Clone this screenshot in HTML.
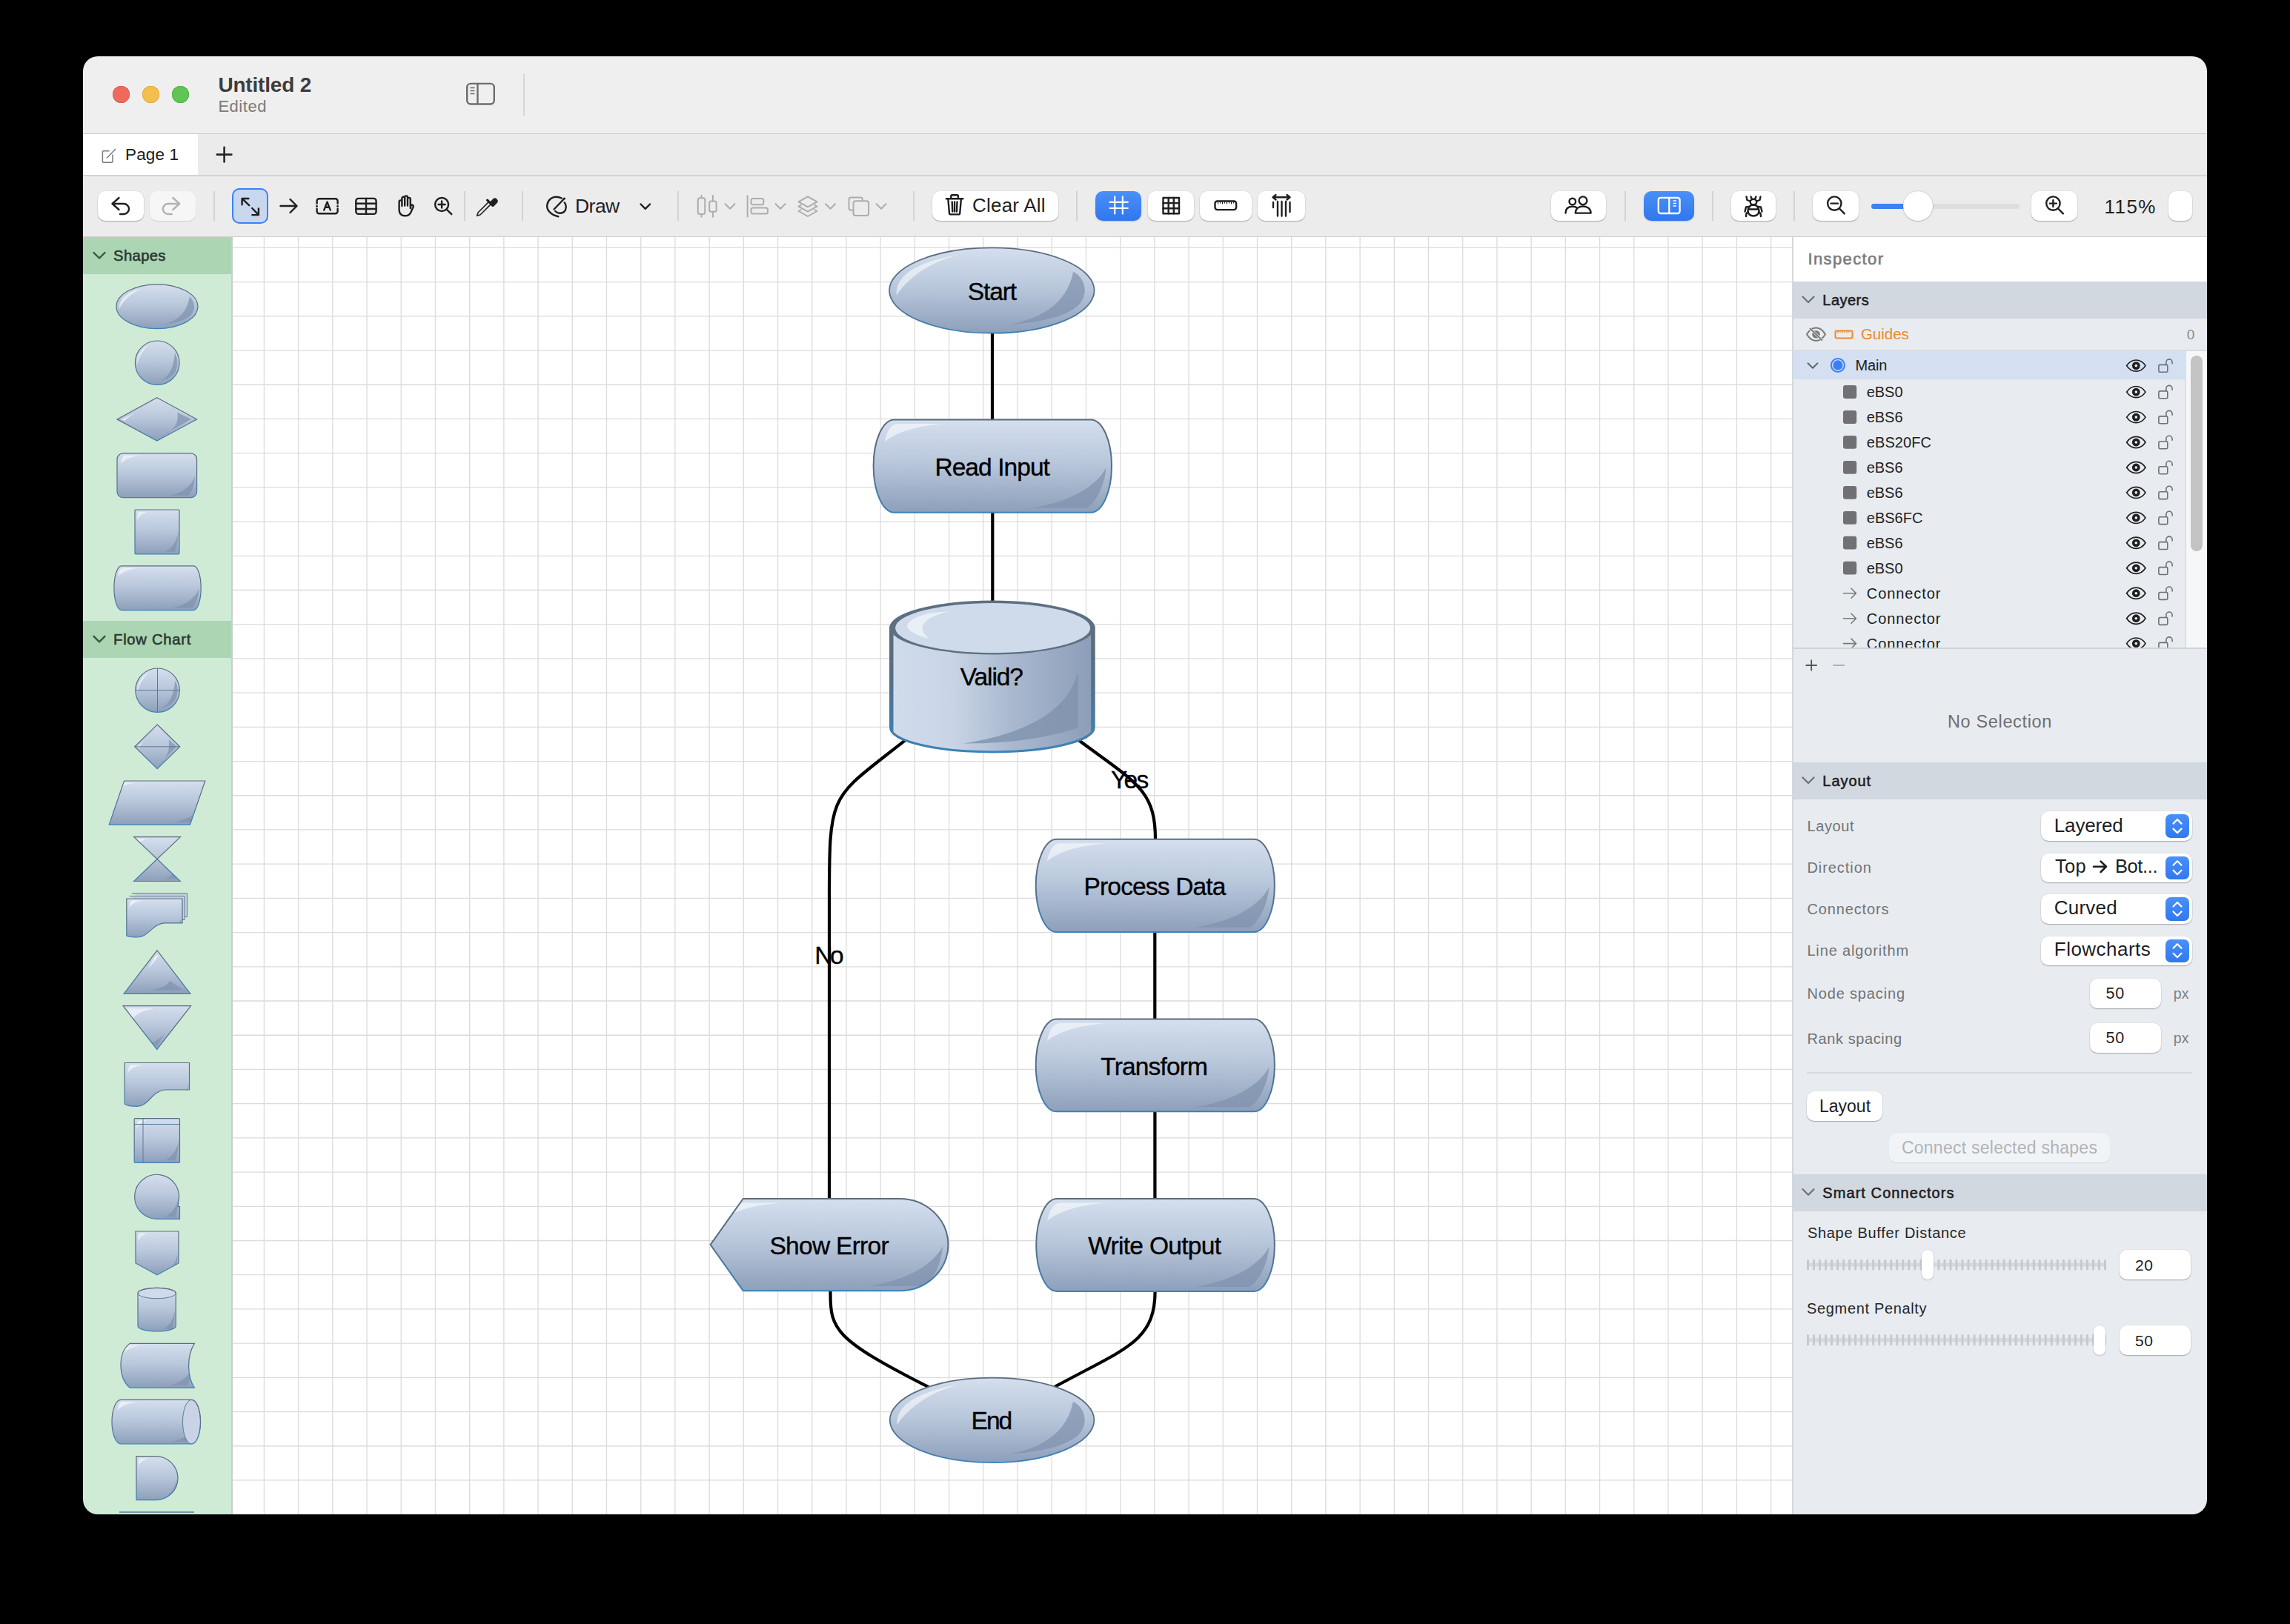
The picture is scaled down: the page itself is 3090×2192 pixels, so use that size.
<!DOCTYPE html><html><head><meta charset="utf-8"><style>
html,body{margin:0;padding:0;background:#000;width:3090px;height:2192px;overflow:hidden;}
.t{position:absolute;white-space:nowrap;font-family:"Liberation Sans",sans-serif;}
#win{position:absolute;left:0;top:0;width:3090px;height:2192px;clip-path:inset(76px 112px 148px 112px round 20px);}
#win div,#win svg{position:absolute;}
.btn{background:#fff;border-radius:10px;box-shadow:0 1px 1.5px rgba(0,0,0,0.28),0 0 0 0.5px rgba(0,0,0,0.06);}
</style></head><body><div id="win">
<svg width="0" height="0" style="position:absolute;left:0;top:0"><defs><linearGradient id="gf" x1="0" y1="0" x2="0" y2="1"><stop offset="0" stop-color="#d4dfee"/><stop offset="0.45" stop-color="#bac8dc"/><stop offset="1" stop-color="#8d9fba"/></linearGradient><linearGradient id="gs" x1="0" y1="0" x2="0" y2="1"><stop offset="0" stop-color="#5e6c7a"/><stop offset="0.5" stop-color="#556f88"/><stop offset="1" stop-color="#3b82ba"/></linearGradient><linearGradient id="gcyl" x1="0" y1="0" x2="1" y2="0"><stop offset="0" stop-color="#d0dcec"/><stop offset="0.3" stop-color="#c9d5e6"/><stop offset="0.6" stop-color="#a9b8cf"/><stop offset="1" stop-color="#8b9db7"/></linearGradient></defs></svg>
<div style="position:absolute;left:112px;top:76px;width:2866px;height:104px;background:#efefef;"></div>
<div style="position:absolute;left:112px;top:180px;width:2866px;height:1px;background:#c9c9c9;"></div>
<div style="position:absolute;left:112px;top:181px;width:2866px;height:55px;background:#ebebeb;"></div>
<div style="position:absolute;left:112px;top:181px;width:155px;height:55px;background:#fff;"></div>
<div style="position:absolute;left:112px;top:236px;width:2866px;height:2px;background:#d4d4d4;"></div>
<div style="position:absolute;left:112px;top:238px;width:2866px;height:81px;background:#ececec;"></div>
<div style="position:absolute;left:112px;top:319px;width:2866px;height:1px;background:#cfcfcf;"></div>
<div style="left:152px;top:116px;width:23px;height:23px;border-radius:50%;background:#ee6a5f;box-shadow:inset 0 0 0 0.7px #d4564c;"></div>
<div style="left:192px;top:116px;width:23px;height:23px;border-radius:50%;background:#f5bf4f;box-shadow:inset 0 0 0 0.7px #d9a33a;"></div>
<div style="left:232px;top:116px;width:23px;height:23px;border-radius:50%;background:#61c555;box-shadow:inset 0 0 0 0.7px #4ea843;"></div>
<div class="t" style="left:294.4px;top:100.7px;font-size:28px;line-height:28px;color:#3d3d3d;font-weight:bold;letter-spacing:-0.18px;">Untitled 2</div>
<div class="t" style="left:294.4px;top:133.4px;font-size:22px;line-height:22px;color:#7b7b7b;letter-spacing:0.52px;">Edited</div>
<svg style="position:absolute;left:620px;top:100px;" width="60" height="50" viewBox="620 100 60 50"><rect x="630.2" y="112.9" width="36.6" height="27.6" rx="5" fill="none" stroke="#6d6d6d" stroke-width="2.4"/><line x1="644.5" y1="113" x2="644.5" y2="140.5" stroke="#6d6d6d" stroke-width="2.4"/><path d="M634.5,118.5h6M634.5,122.5h6M634.5,126.5h6" stroke="#6d6d6d" stroke-width="1.6"/></svg>
<div style="position:absolute;left:706px;top:100px;width:2px;height:56px;background:#d6d6d6;"></div>
<svg style="position:absolute;left:130px;top:195px;" width="35" height="30" viewBox="130 195 35 30"><path d="M152,208.5 v9.5 a1.2,1.2 0 0 1 -1.2,1.2 h-11.2 a1.2,1.2 0 0 1 -1.2,-1.2 v-13 a1.2,1.2 0 0 1 1.2,-1.2 h8" fill="none" stroke="#7a7a7a" stroke-width="1.5"/><path d="M144,213.5 L156,201" stroke="#7a7a7a" stroke-width="1.5"/></svg>
<div class="t" style="left:169.0px;top:197.5px;font-size:22.5px;line-height:22.5px;color:#1c1c1c;letter-spacing:0.14px;">Page 1</div>
<svg style="position:absolute;left:285px;top:190px;" width="35" height="35" viewBox="285 190 35 35"><path d="M302.6,198.8v19.6M292.8,208.6h19.6" stroke="#262626" stroke-width="2.6" stroke-linecap="round"/></svg>
<div class="btn" style="left:131.8px;top:257.8px;width:62.1px;height:40.4px;"></div>
<div class="btn" style="left:202px;top:257.8px;width:61.8px;height:40.4px;background:#f6f6f6;box-shadow:0 1px 1.5px rgba(0,0,0,0.12);"></div>
<svg style="position:absolute;left:140px;top:255px;" width="130" height="45" viewBox="140 255 130 45"><path d="M160.5,267 L151.5,275 L160.5,283 M151.5,275 H167 a7,7 0 0 1 0,14 H162" fill="none" stroke="#1f1f1f" stroke-width="2.4" stroke-linecap="round" stroke-linejoin="round"/><path d="M233.3,267 L242.3,275 L233.3,283 M242.3,275 H226.8 a7,7 0 0 0 0,14 H231.8" fill="none" stroke="#b2b2b2" stroke-width="2.4" stroke-linecap="round" stroke-linejoin="round"/></svg>
<div style="position:absolute;left:288px;top:258px;width:2px;height:40px;background:#d3d3d3;"></div>
<div style="left:313.4px;top:253.6px;width:48.7px;height:48.8px;box-sizing:border-box;border:2.6px solid #3a83f6;border-radius:10px;background:#c8d6ee;"></div>
<svg style="position:absolute;left:320px;top:260px;" width="400" height="40" viewBox="320 260 400 40"><path d="M326.6,276.3 V268 H335.4 M327,268.4 L336.2,277.2 M340.2,281 L348.8,289.8 M340.4,290.1 H348.9 V281.5" fill="none" stroke="#1f1f1f" stroke-width="2.4" stroke-linecap="round" stroke-linejoin="round" stroke-width="2.6"/><path d="M378.5,278 H400.5 M391.5,269 L400.5,278 L391.5,287" fill="none" stroke="#1f1f1f" stroke-width="2.4" stroke-linecap="round" stroke-linejoin="round"/><path d="M427.6,274.8 V271.3 a3,3 0 0 1 3,-3 H452.6 a3,3 0 0 1 3,3 V274.8 M427.6,281.8 V285.3 a3,3 0 0 0 3,3 H452.6 a3,3 0 0 0 3,-3 V281.8" fill="none" stroke="#1f1f1f" stroke-width="2.4" stroke-linecap="round" stroke-linejoin="round" stroke-width="2.2"/><circle cx="427.6" cy="278.3" r="1.4" fill="#1f1f1f"/><circle cx="455.6" cy="278.3" r="1.4" fill="#1f1f1f"/><path d="M437.2,283.6 L441.5,272.6 L445.8,283.6 M438.7,279.7 H444.3" fill="none" stroke="#1f1f1f" stroke-width="2.4" stroke-linecap="round" stroke-linejoin="round" stroke-width="1.9"/><rect x="480.3" y="267.9" width="27.3" height="21" rx="3.5" fill="none" stroke="#1f1f1f" stroke-width="2.4" stroke-linecap="round" stroke-linejoin="round" stroke-width="2.3"/><path d="M494,268 V289 M480.5,274.8 H507.5 M480.5,282 H507.5" fill="none" stroke="#1f1f1f" stroke-width="2.4" stroke-linecap="round" stroke-linejoin="round" stroke-width="1.9"/><path d="M538.6,283 V272.3 a1.9,1.9 0 0 1 3.8,0 V278 V267.6 a1.9,1.9 0 0 1 3.8,0 V277.5 V266.3 a1.9,1.9 0 0 1 3.8,0 V277.5 V268.8 a1.9,1.9 0 0 1 3.8,0 V281 L554.6,277.2 a1.9,1.9 0 0 1 3.1,2.1 L554,287.3 Q551.5,291.3 546.8,291.3 Q538.6,291.3 538.6,283 Z" fill="none" stroke="#1f1f1f" stroke-width="2.4" stroke-linecap="round" stroke-linejoin="round" stroke-width="1.7"/><circle cx="596.1" cy="276" r="9" fill="none" stroke="#1f1f1f" stroke-width="2.4" stroke-linecap="round" stroke-linejoin="round" stroke-width="2.3"/><path d="M591.6,276 H600.6 M596.1,271.5 V280.5" fill="none" stroke="#1f1f1f" stroke-width="2.4" stroke-linecap="round" stroke-linejoin="round" stroke-width="2.1"/><path d="M602.9,282.8 L609.3,289.2" fill="none" stroke="#1f1f1f" stroke-width="2.4" stroke-linecap="round" stroke-linejoin="round" stroke-width="3.2"/></svg>
<div style="position:absolute;left:626px;top:258px;width:2px;height:40px;background:#d3d3d3;"></div>
<svg style="position:absolute;left:640px;top:262px;" width="35" height="35" viewBox="640 262 35 35"><path d="M643.6,291.3 L645.2,286.8 L659.6,272.4 L662.6,275.4 L648.2,289.8 Z" fill="none" stroke="#1f1f1f" stroke-width="1.6" stroke-linejoin="round"/><path d="M657.6,270.2 L664.8,277.4" stroke="#1f1f1f" stroke-width="3.2" stroke-linecap="round"/><path d="M660.5,273.2 L665.2,268.5 a3.9,3.9 0 0 1 5.5,5.5 L666,278.7 Z" fill="#1f1f1f"/></svg>
<div style="position:absolute;left:704px;top:258px;width:2px;height:40px;background:#d3d3d3;"></div>
<svg style="position:absolute;left:730px;top:258px;" width="160" height="42" viewBox="730 258 160 42"><path d="M753.3,292.2 C742,290 737,282 738.4,276 C740,268.5 746,265.8 750,265.8 C753.5,265.8 756,266.5 757.8,267.6" fill="none" stroke="#1f1f1f" stroke-width="2.4" stroke-linecap="round" stroke-linejoin="round" stroke-width="2.2"/><path d="M761.8,273.5 C764.5,277 764.5,283 761,286 C758,288.5 752.5,288.5 749.3,285" fill="none" stroke="#1f1f1f" stroke-width="2.4" stroke-linecap="round" stroke-linejoin="round" stroke-width="2.2"/><path d="M747.5,282.5 L760.5,269" fill="none" stroke="#1f1f1f" stroke-width="2.4" stroke-linecap="round" stroke-linejoin="round" stroke-width="2.8"/><circle cx="761.5" cy="268" r="1.6" fill="#1f1f1f"/><path d="M864.5,275.5 L870.8,281.8 L877.1,275.5" fill="none" stroke="#1f1f1f" stroke-width="2.4" stroke-linecap="round" stroke-linejoin="round" stroke-width="3.2"/></svg>
<div class="t" style="left:776.0px;top:265.2px;font-size:26.5px;line-height:26.5px;color:#1f1f1f;letter-spacing:-0.53px;">Draw</div>
<div style="position:absolute;left:914px;top:258px;width:2px;height:40px;background:#d3d3d3;"></div>
<svg style="position:absolute;left:935px;top:258px;" width="270" height="42" viewBox="935 258 270 42"><rect x="941.8" y="267.3" width="9.4" height="21.7" rx="2.5" fill="none" stroke="#adadad" stroke-width="2" stroke-linecap="round" stroke-linejoin="round"/><path d="M946.5,263.8 V267.3 M946.5,289 V292.8" fill="none" stroke="#adadad" stroke-width="2" stroke-linecap="round" stroke-linejoin="round"/><rect x="957.2" y="271.5" width="9.4" height="14.2" rx="2.5" fill="none" stroke="#adadad" stroke-width="2" stroke-linecap="round" stroke-linejoin="round"/><path d="M961.9,264 V271.5 M961.9,285.7 V292.8" fill="none" stroke="#adadad" stroke-width="2" stroke-linecap="round" stroke-linejoin="round"/><path d="M978.5,275.2 L985.0,281.7 L991.5,275.2" fill="none" stroke="#adadad" stroke-width="2" stroke-linecap="round" stroke-linejoin="round" stroke-width="2.4"/><path d="M1008.6,264.2 V292.6" fill="none" stroke="#adadad" stroke-width="2" stroke-linecap="round" stroke-linejoin="round"/><rect x="1013.5" y="268" width="16.8" height="8.2" rx="2.5" fill="none" stroke="#adadad" stroke-width="2" stroke-linecap="round" stroke-linejoin="round"/><rect x="1013.5" y="280.4" width="22.4" height="8.2" rx="2.5" fill="none" stroke="#adadad" stroke-width="2" stroke-linecap="round" stroke-linejoin="round"/><path d="M1046.5,275.2 L1053.0,281.7 L1059.5,275.2" fill="none" stroke="#adadad" stroke-width="2" stroke-linecap="round" stroke-linejoin="round" stroke-width="2.4"/><path d="M1090,265.3 L1102.5,272.3 L1090,279.3 L1077.5,272.3 Z" fill="none" stroke="#adadad" stroke-width="2" stroke-linecap="round" stroke-linejoin="round"/><path d="M1080.5,277 L1077.5,278.6 L1090,285.6 L1102.5,278.6 L1099.5,277 M1080.5,283.3 L1077.5,285 L1090,292 L1102.5,285 L1099.5,283.3" fill="none" stroke="#adadad" stroke-width="2" stroke-linecap="round" stroke-linejoin="round"/><path d="M1114,275.2 L1120.5,281.7 L1127,275.2" fill="none" stroke="#adadad" stroke-width="2" stroke-linecap="round" stroke-linejoin="round" stroke-width="2.4"/><path d="M1150.8,283.7 H1148.5 a3,3 0 0 1 -3,-3 V269.5 a3,3 0 0 1 3,-3 H1161 a3,3 0 0 1 3,3 V271" fill="none" stroke="#adadad" stroke-width="2" stroke-linecap="round" stroke-linejoin="round"/><rect x="1151.5" y="271.2" width="20.6" height="19.8" rx="3" fill="none" stroke="#adadad" stroke-width="2" stroke-linecap="round" stroke-linejoin="round"/><path d="M1182.5,275.2 L1189.0,281.7 L1195.5,275.2" fill="none" stroke="#adadad" stroke-width="2" stroke-linecap="round" stroke-linejoin="round" stroke-width="2.4"/></svg>
<div style="position:absolute;left:1231.7px;top:258px;width:2px;height:40px;background:#d3d3d3;"></div>
<div class="btn" style="left:1257.6px;top:257.6px;width:170.4px;height:40.9px;"></div>
<svg style="position:absolute;left:1270px;top:258px;" width="40" height="38" viewBox="1270 258 40 38"><path d="M1276.8,268.2 H1299.4 M1283.3,268 V264.8 a1.6,1.6 0 0 1 1.6,-1.6 h6.4 a1.6,1.6 0 0 1 1.6,1.6 V268 M1279.3,268.4 L1281,287.8 a1.8,1.8 0 0 0 1.8,1.6 h10.6 a1.8,1.8 0 0 0 1.8,-1.6 L1296.9,268.4 M1284.7,272.5 L1285.2,285.5 M1288.1,272.5 V285.5 M1291.5,272.5 L1291,285.5" fill="none" stroke="#1f1f1f" stroke-width="2.4" stroke-linecap="round" stroke-linejoin="round" stroke-width="2.1"/></svg>
<div class="t" style="left:1312.0px;top:263.7px;font-size:26px;line-height:26px;color:#1f1f1f;letter-spacing:0.22px;">Clear All</div>
<div style="position:absolute;left:1452px;top:258px;width:2px;height:40px;background:#d3d3d3;"></div>
<div style="left:1478px;top:257.8px;width:62px;height:40.4px;border-radius:10px;background:linear-gradient(#4a90f8,#3076ee);box-shadow:0 1px 1.5px rgba(0,0,0,0.2);"></div>
<div class="btn" style="left:1549px;top:257.8px;width:61.7px;height:40.4px;"></div>
<div class="btn" style="left:1619px;top:257.8px;width:69.7px;height:40.4px;"></div>
<div class="btn" style="left:1697px;top:257.8px;width:63.8px;height:40.4px;"></div>
<svg style="position:absolute;left:1480px;top:258px;" width="290" height="42" viewBox="1480 258 290 42"><path d="M1504.2,265.2 V288.6 M1514.8,265.2 V288.6 M1497.4,272.9 H1521.8 M1497.4,281 H1521.8" fill="none" stroke="#fff" stroke-width="2.1" stroke-linecap="round"/><rect x="1569.5" y="267" width="21.5" height="21.2" fill="none" stroke="#1f1f1f" stroke-width="2.4" stroke-linecap="round" stroke-linejoin="round" stroke-width="2.3" stroke-linecap="butt" stroke-linejoin="miter"/><path d="M1576.7,267 V288.2 M1583.8,267 V288.2 M1569.5,274.1 H1591 M1569.5,281.2 H1591" fill="none" stroke="#1f1f1f" stroke-width="2.4" stroke-linecap="round" stroke-linejoin="round" stroke-width="2" stroke-linecap="butt"/><rect x="1639.5" y="271.5" width="28.6" height="11.6" rx="3" fill="none" stroke="#1f1f1f" stroke-width="2.4" stroke-linecap="round" stroke-linejoin="round" stroke-width="2.2"/><path d="M1643.5,272.5 v3 M1646.5,272.5 v2 M1649.5,272.5 v3 M1652.5,272.5 v2 M1655.5,272.5 v3 M1658.5,272.5 v2 M1661.5,272.5 v3 M1664.5,272.5 v2" stroke="#1f1f1f" stroke-width="1.1"/><path d="M1717.5,266.3 H1740.5 M1721.5,263 L1717.5,266.3 L1721.5,269.6 M1736.5,263 L1740.5,266.3 L1736.5,269.6" fill="none" stroke="#1f1f1f" stroke-width="2.4" stroke-linecap="round" stroke-linejoin="round" stroke-width="2"/><path d="M1718,273 V280 M1724,272 V291.5 M1729.5,272 V291.5 M1735,272 V291.5 M1740.5,273 V286" fill="none" stroke="#1f1f1f" stroke-width="2.4" stroke-linecap="round" stroke-linejoin="round" stroke-width="2.2"/></svg>
<div class="btn" style="left:2092.8px;top:257.8px;width:74.2px;height:40.4px;"></div>
<div style="position:absolute;left:2192px;top:258px;width:2px;height:40px;background:#d3d3d3;"></div>
<div style="left:2218px;top:257.8px;width:68px;height:40.4px;border-radius:10px;background:linear-gradient(#4a90f8,#3076ee);box-shadow:0 1px 1.5px rgba(0,0,0,0.2);"></div>
<div style="position:absolute;left:2310px;top:258px;width:2px;height:40px;background:#d3d3d3;"></div>
<div class="btn" style="left:2336px;top:257.8px;width:60.0px;height:40.4px;"></div>
<div style="position:absolute;left:2420px;top:258px;width:2px;height:40px;background:#d3d3d3;"></div>
<div class="btn" style="left:2446px;top:257.8px;width:62.0px;height:40.4px;"></div>
<div class="btn" style="left:2740.8px;top:257.8px;width:61.9px;height:40.4px;"></div>
<div class="btn" style="left:2925.7px;top:257.8px;width:32.3px;height:40.4px;"></div>
<svg style="position:absolute;left:2100px;top:258px;" width="880" height="42" viewBox="2100 258 880 42"><circle cx="2121.8" cy="272" r="4.3" fill="none" stroke="#1f1f1f" stroke-width="2.4" stroke-linecap="round" stroke-linejoin="round" stroke-width="2"/><path d="M2112.5,287.6 C2112.5,281 2116.5,278.8 2121.8,278.8 C2124.5,278.8 2126.3,279.3 2127.6,280.3" fill="none" stroke="#1f1f1f" stroke-width="2.4" stroke-linecap="round" stroke-linejoin="round" stroke-width="2"/><circle cx="2136" cy="270.8" r="5.4" fill="none" stroke="#1f1f1f" stroke-width="2.4" stroke-linecap="round" stroke-linejoin="round" stroke-width="2"/><path d="M2125.8,287.6 C2125.8,282 2130,278.5 2136,278.5 C2142,278.5 2146.6,282 2146.6,287.6 Z" fill="none" stroke="#1f1f1f" stroke-width="2.4" stroke-linecap="round" stroke-linejoin="round" stroke-width="2"/><rect x="2237.8" y="266.8" width="28.8" height="21.2" rx="3" fill="none" stroke="#fff" stroke-width="2.3"/><path d="M2252.3,267 V288" stroke="#fff" stroke-width="2.3"/><path d="M2257.5,271 h4.5 M2257.5,274.5 h4.5 M2257.5,278 h4.5" stroke="#fff" stroke-width="1.6"/><path d="M2362.5,265.5 l1.5,3.5 M2369.5,265.5 l-1.5,3.5" fill="none" stroke="#1f1f1f" stroke-width="2.4" stroke-linecap="round" stroke-linejoin="round" stroke-width="1.8"/><ellipse cx="2366" cy="272.5" rx="4.3" ry="3.8" fill="none" stroke="#1f1f1f" stroke-width="2.4" stroke-linecap="round" stroke-linejoin="round" stroke-width="2"/><path d="M2366,276.5 c-5.5,0 -7.5,5 -7.5,8.5 c0,4 3.5,6.5 7.5,6.5 c4,0 7.5,-2.5 7.5,-6.5 c0,-3.5 -2,-8.5 -7.5,-8.5 Z M2359.5,282.5 h13" fill="none" stroke="#1f1f1f" stroke-width="2.4" stroke-linecap="round" stroke-linejoin="round" stroke-width="2"/><path d="M2361.5,271.5 l-4,-1.5 l-1,-4.5 M2370.5,271.5 l4,-1.5 l1,-4.5 M2359.5,279 l-3.5,0.5 l-1.5,6 M2372.5,279 l3.5,0.5 l1.5,6 M2359,286 l-2.5,2 l-0.5,4 M2373,286 l2.5,2 l0.5,4" fill="none" stroke="#1f1f1f" stroke-width="2.4" stroke-linecap="round" stroke-linejoin="round" stroke-width="1.8"/><circle cx="2475.3" cy="274.6" r="9.2" fill="none" stroke="#1f1f1f" stroke-width="2.4" stroke-linecap="round" stroke-linejoin="round" stroke-width="2.3"/><path d="M2470.6,274.6 H2480" fill="none" stroke="#1f1f1f" stroke-width="2.4" stroke-linecap="round" stroke-linejoin="round" stroke-width="2.1"/><path d="M2482,281.5 L2488.8,288.3" fill="none" stroke="#1f1f1f" stroke-width="2.4" stroke-linecap="round" stroke-linejoin="round" stroke-width="3.2"/><circle cx="2770.4" cy="274.6" r="9.2" fill="none" stroke="#1f1f1f" stroke-width="2.4" stroke-linecap="round" stroke-linejoin="round" stroke-width="2.3"/><path d="M2765.9,274.6 H2774.9 M2770.4,270.1 V279.1" fill="none" stroke="#1f1f1f" stroke-width="2.4" stroke-linecap="round" stroke-linejoin="round" stroke-width="2.1"/><path d="M2777.1,281.5 L2783.9,288.3" fill="none" stroke="#1f1f1f" stroke-width="2.4" stroke-linecap="round" stroke-linejoin="round" stroke-width="3.2"/></svg>
<div style="position:absolute;left:2525px;top:274.5px;width:200px;height:7px;background:#dedede;border-radius:3.5px;"></div>
<div style="position:absolute;left:2525px;top:274.5px;width:63px;height:7px;background:#3b82f6;border-radius:3.5px;"></div>
<div style="left:2567.7px;top:258px;width:40px;height:40px;border-radius:50%;background:#fff;box-shadow:0 0.5px 2px rgba(0,0,0,0.3),0 0 0 0.5px rgba(0,0,0,0.08);"></div>
<div class="t" style="left:2839.5px;top:266.3px;font-size:26px;line-height:26px;color:#1f1f1f;letter-spacing:1.47px;">115%</div>
<div style="position:absolute;left:112px;top:320px;width:200px;height:1724px;background:#cfebd6;"></div>
<div style="position:absolute;left:312px;top:320px;width:2px;height:1724px;background:#c9cdca;"></div>
<div style="position:absolute;left:112px;top:320px;width:200px;height:50px;background:#acd5b4;"></div>
<div style="position:absolute;left:112px;top:838px;width:200px;height:49.5px;background:#acd5b4;"></div>
<svg style="position:absolute;left:120px;top:335px;" width="30" height="20" viewBox="120 335 30 20"><path d="M126.5,341 L134,348.5 L141.5,341" fill="none" stroke="#2e5e3a" stroke-width="2.4" stroke-linecap="round" stroke-linejoin="round"/></svg>
<svg style="position:absolute;left:120px;top:853px;" width="30" height="20" viewBox="120 853 30 20"><path d="M126.5,858.8 L134,866.3 L141.5,858.8" fill="none" stroke="#2e5e3a" stroke-width="2.4" stroke-linecap="round" stroke-linejoin="round"/></svg>
<div class="t" style="left:153.1px;top:334.8px;font-size:20.2px;line-height:20.2px;color:#2b3a2f;-webkit-text-stroke:0.6px #2b3a2f;letter-spacing:0.38px;">Shapes</div>
<div class="t" style="left:153.1px;top:852.9px;font-size:20.2px;line-height:20.2px;color:#2b3a2f;-webkit-text-stroke:0.6px #2b3a2f;letter-spacing:0.73px;">Flow Chart</div>
<svg style="position:absolute;left:112px;top:320px;" width="200" height="1724" viewBox="112 320 200 1724"><clipPath id="c1"><path d="M157,413.70000000000005 A55.0,29.900000000000006 0 1 1 267,413.70000000000005 A55.0,29.900000000000006 0 1 1 157,413.70000000000005 Z"/></clipPath><path d="M157,413.70000000000005 A55.0,29.900000000000006 0 1 1 267,413.70000000000005 A55.0,29.900000000000006 0 1 1 157,413.70000000000005 Z" fill="url(#gf)"/><g clip-path="url(#c1)"><path d="M0.035,0.555 C0.03,0.38 0.09,0.18 0.339,0.083 C0.22,0.15 0.10,0.32 0.035,0.555 Z" fill="#fff" fill-opacity="0.55" transform="translate(157,383.8) scale(110,59.80000000000001)"/><path d="M0.897,0.28 C0.96,0.36 0.975,0.55 0.92,0.68 C0.85,0.82 0.72,0.88 0.59,0.896 C0.76,0.82 0.87,0.62 0.897,0.28 Z" fill="#7f92ad" fill-opacity="0.72" transform="translate(157,383.8) scale(110,59.80000000000001)"/></g><path d="M157,413.70000000000005 A55.0,29.900000000000006 0 1 1 267,413.70000000000005 A55.0,29.900000000000006 0 1 1 157,413.70000000000005 Z" fill="none" stroke="url(#gs)" stroke-width="1.2"/><clipPath id="c2"><path d="M182.4,489.7 A29.799999999999997,29.69999999999999 0 1 1 242,489.7 A29.799999999999997,29.69999999999999 0 1 1 182.4,489.7 Z"/></clipPath><path d="M182.4,489.7 A29.799999999999997,29.69999999999999 0 1 1 242,489.7 A29.799999999999997,29.69999999999999 0 1 1 182.4,489.7 Z" fill="url(#gf)"/><g clip-path="url(#c2)"><path d="M0.035,0.555 C0.03,0.38 0.09,0.18 0.339,0.083 C0.22,0.15 0.10,0.32 0.035,0.555 Z" fill="#fff" fill-opacity="0.55" transform="translate(182.4,460) scale(59.599999999999994,59.39999999999998)"/><path d="M0.897,0.28 C0.96,0.36 0.975,0.55 0.92,0.68 C0.85,0.82 0.72,0.88 0.59,0.896 C0.76,0.82 0.87,0.62 0.897,0.28 Z" fill="#7f92ad" fill-opacity="0.72" transform="translate(182.4,460) scale(59.599999999999994,59.39999999999998)"/></g><path d="M182.4,489.7 A29.799999999999997,29.69999999999999 0 1 1 242,489.7 A29.799999999999997,29.69999999999999 0 1 1 182.4,489.7 Z" fill="none" stroke="url(#gs)" stroke-width="1.2"/><clipPath id="c3"><path d="M211.8,536.7 L265.6,565.9 L211.8,595.0 L158.0,565.9 Z"/></clipPath><path d="M211.8,536.7 L265.6,565.9 L211.8,595.0 L158.0,565.9 Z" fill="url(#gf)"/><g clip-path="url(#c3)"><path d="M0.05,0.5 L0.22,0.36 C0.15,0.44 0.12,0.49 0.1,0.54 Z" fill="#fff" fill-opacity="0.55" transform="translate(158,536.7) scale(107.60000000000002,58.299999999999955)"/><path d="M0.755,0.344 L0.93,0.5 L0.53,0.91 C0.70,0.78 0.78,0.62 0.755,0.344 Z" fill="#7f92ad" fill-opacity="0.72" transform="translate(158,536.7) scale(107.60000000000002,58.299999999999955)"/></g><path d="M211.8,536.7 L265.6,565.9 L211.8,595.0 L158.0,565.9 Z" fill="none" stroke="url(#gs)" stroke-width="1.2"/><clipPath id="c4"><path d="M166,611.9 H257.6 A8,8 0 0 1 265.6,619.9 V663.7 A8,8 0 0 1 257.6,671.7 H166 A8,8 0 0 1 158,663.7 V619.9 A8,8 0 0 1 166,611.9 Z"/></clipPath><path d="M166,611.9 H257.6 A8,8 0 0 1 265.6,619.9 V663.7 A8,8 0 0 1 257.6,671.7 H166 A8,8 0 0 1 158,663.7 V619.9 A8,8 0 0 1 166,611.9 Z" fill="url(#gf)"/><g clip-path="url(#c4)"><path d="M0.046,0.239 C0.058,0.13 0.068,0.05 0.10,0.044 L0.30,0.044 C0.18,0.065 0.09,0.14 0.046,0.239 Z" fill="#fff" fill-opacity="0.55" transform="translate(158,611.9) scale(107.60000000000002,59.80000000000007)"/><path d="M0.667,0.951 L0.898,0.951 C0.94,0.87 0.97,0.70 0.977,0.518 C0.93,0.75 0.80,0.90 0.667,0.951 Z" fill="#7f92ad" fill-opacity="0.72" transform="translate(158,611.9) scale(107.60000000000002,59.80000000000007)"/></g><path d="M166,611.9 H257.6 A8,8 0 0 1 265.6,619.9 V663.7 A8,8 0 0 1 257.6,671.7 H166 A8,8 0 0 1 158,663.7 V619.9 A8,8 0 0 1 166,611.9 Z" fill="none" stroke="url(#gs)" stroke-width="1.2"/><clipPath id="c5"><path d="M183,688 H241 A1,1 0 0 1 242,689 V746.8 A1,1 0 0 1 241,747.8 H183 A1,1 0 0 1 182,746.8 V689 A1,1 0 0 1 183,688 Z"/></clipPath><path d="M183,688 H241 A1,1 0 0 1 242,689 V746.8 A1,1 0 0 1 241,747.8 H183 A1,1 0 0 1 182,746.8 V689 A1,1 0 0 1 183,688 Z" fill="url(#gf)"/><g clip-path="url(#c5)"><path d="M0.046,0.239 C0.058,0.13 0.068,0.05 0.10,0.044 L0.30,0.044 C0.18,0.065 0.09,0.14 0.046,0.239 Z" fill="#fff" fill-opacity="0.55" transform="translate(182,688) scale(60,59.799999999999955)"/><path d="M0.667,0.951 L0.898,0.951 C0.94,0.87 0.97,0.70 0.977,0.518 C0.93,0.75 0.80,0.90 0.667,0.951 Z" fill="#7f92ad" fill-opacity="0.72" transform="translate(182,688) scale(60,59.799999999999955)"/></g><path d="M183,688 H241 A1,1 0 0 1 242,689 V746.8 A1,1 0 0 1 241,747.8 H183 A1,1 0 0 1 182,746.8 V689 A1,1 0 0 1 183,688 Z" fill="none" stroke="url(#gs)" stroke-width="1.2"/><clipPath id="c6"><path d="M163.9,763.8 H261.2 A10,29.90 0 0 1 261.2,823.6 H163.9 A10,29.90 0 0 1 163.9,763.8 Z"/></clipPath><path d="M163.9,763.8 H261.2 A10,29.90 0 0 1 261.2,823.6 H163.9 A10,29.90 0 0 1 163.9,763.8 Z" fill="url(#gf)"/><g clip-path="url(#c6)"><path d="M0.046,0.239 C0.058,0.13 0.068,0.05 0.10,0.044 L0.30,0.044 C0.18,0.065 0.09,0.14 0.046,0.239 Z" fill="#fff" fill-opacity="0.55" transform="translate(153.9,763.8) scale(117.29999999999998,59.80000000000007)"/><path d="M0.667,0.951 L0.898,0.951 C0.94,0.87 0.97,0.70 0.977,0.518 C0.93,0.75 0.80,0.90 0.667,0.951 Z" fill="#7f92ad" fill-opacity="0.72" transform="translate(153.9,763.8) scale(117.29999999999998,59.80000000000007)"/></g><path d="M163.9,763.8 H261.2 A10,29.90 0 0 1 261.2,823.6 H163.9 A10,29.90 0 0 1 163.9,763.8 Z" fill="none" stroke="url(#gs)" stroke-width="1.2"/><clipPath id="c7"><path d="M182.8,931.7 A29.75,29.69999999999999 0 1 1 242.3,931.7 A29.75,29.69999999999999 0 1 1 182.8,931.7 Z"/></clipPath><path d="M182.8,931.7 A29.75,29.69999999999999 0 1 1 242.3,931.7 A29.75,29.69999999999999 0 1 1 182.8,931.7 Z" fill="url(#gf)"/><g clip-path="url(#c7)"><path d="M0.035,0.555 C0.03,0.38 0.09,0.18 0.339,0.083 C0.22,0.15 0.10,0.32 0.035,0.555 Z" fill="#fff" fill-opacity="0.55" transform="translate(182.8,902) scale(59.5,59.39999999999998)"/><path d="M0.897,0.28 C0.96,0.36 0.975,0.55 0.92,0.68 C0.85,0.82 0.72,0.88 0.59,0.896 C0.76,0.82 0.87,0.62 0.897,0.28 Z" fill="#7f92ad" fill-opacity="0.72" transform="translate(182.8,902) scale(59.5,59.39999999999998)"/></g><path d="M212.5,902 V961.4 M182.8,931.7 H242.3" stroke="#5c7a96" stroke-width="1"/><path d="M182.8,931.7 A29.75,29.69999999999999 0 1 1 242.3,931.7 A29.75,29.69999999999999 0 1 1 182.8,931.7 Z" fill="none" stroke="url(#gs)" stroke-width="1.2"/><clipPath id="c8"><path d="M212.2,978.0 L242.7,1007.8 L212.2,1037.7 L181.7,1007.8 Z"/></clipPath><path d="M212.2,978.0 L242.7,1007.8 L212.2,1037.7 L181.7,1007.8 Z" fill="url(#gf)"/><g clip-path="url(#c8)"><path d="M0.05,0.5 L0.22,0.36 C0.15,0.44 0.12,0.49 0.1,0.54 Z" fill="#fff" fill-opacity="0.55" transform="translate(181.7,978) scale(61.0,59.700000000000045)"/><path d="M0.755,0.344 L0.93,0.5 L0.53,0.91 C0.70,0.78 0.78,0.62 0.755,0.344 Z" fill="#7f92ad" fill-opacity="0.72" transform="translate(181.7,978) scale(61.0,59.700000000000045)"/></g><path d="M181.7,1007.8 H242.7" stroke="#5c7a96" stroke-width="1"/><path d="M212.2,978.0 L242.7,1007.8 L212.2,1037.7 L181.7,1007.8 Z" fill="none" stroke="url(#gs)" stroke-width="1.2"/><clipPath id="c9"><path d="M167.5,1054.0 L276.8,1054.0 L256.5,1113.2 L147.2,1113.2 Z"/></clipPath><path d="M167.5,1054.0 L276.8,1054.0 L256.5,1113.2 L147.2,1113.2 Z" fill="url(#gf)"/><g clip-path="url(#c9)"><path d="M0.046,0.239 C0.058,0.13 0.068,0.05 0.10,0.044 L0.30,0.044 C0.18,0.065 0.09,0.14 0.046,0.239 Z" fill="#fff" fill-opacity="0.55" transform="translate(147.2,1054) scale(129.60000000000002,59.200000000000045)"/><path d="M0.667,0.951 L0.898,0.951 C0.94,0.87 0.97,0.70 0.977,0.518 C0.93,0.75 0.80,0.90 0.667,0.951 Z" fill="#7f92ad" fill-opacity="0.72" transform="translate(147.2,1054) scale(129.60000000000002,59.200000000000045)"/></g><path d="M167.5,1054.0 L276.8,1054.0 L256.5,1113.2 L147.2,1113.2 Z" fill="none" stroke="url(#gs)" stroke-width="1.2"/><clipPath id="c10"><path d="M180.6,1129.6 L243.4,1129.6 L212.0,1159.5 L243.4,1189.5 L180.6,1189.5 L212.0,1159.5 Z"/></clipPath><path d="M180.6,1129.6 L243.4,1129.6 L212.0,1159.5 L243.4,1189.5 L180.6,1189.5 L212.0,1159.5 Z" fill="url(#gf)"/><g clip-path="url(#c10)"><path d="M0.046,0.239 C0.058,0.13 0.068,0.05 0.10,0.044 L0.30,0.044 C0.18,0.065 0.09,0.14 0.046,0.239 Z" fill="#fff" fill-opacity="0.55" transform="translate(180.6,1129.6) scale(62.80000000000001,59.90000000000009)"/><path d="M0.667,0.951 L0.898,0.951 C0.94,0.87 0.97,0.70 0.977,0.518 C0.93,0.75 0.80,0.90 0.667,0.951 Z" fill="#7f92ad" fill-opacity="0.72" transform="translate(180.6,1129.6) scale(62.80000000000001,59.90000000000009)"/></g><path d="M180.6,1129.6 L243.4,1129.6 L212.0,1159.5 L243.4,1189.5 L180.6,1189.5 L212.0,1159.5 Z" fill="none" stroke="url(#gs)" stroke-width="1.2"/><path d="M178,1205.8 H252.5 V1237.5 H249" fill="#c5d1e3" stroke="#5c7a96" stroke-width="1"/><path d="M174.5,1209.5 H249 V1241.5 H246" fill="#c5d1e3" stroke="#5c7a96" stroke-width="1"/><clipPath id="c11"><path d="M170.8,1213 H246 V1245.8 H222 C206,1247 200,1265 185.3,1265 C178,1265 173,1264 170.8,1263 Z"/></clipPath><path d="M170.8,1213 H246 V1245.8 H222 C206,1247 200,1265 185.3,1265 C178,1265 173,1264 170.8,1263 Z" fill="url(#gf)"/><g clip-path="url(#c11)"><path d="M0.046,0.239 C0.058,0.13 0.068,0.05 0.10,0.044 L0.30,0.044 C0.18,0.065 0.09,0.14 0.046,0.239 Z" fill="#fff" fill-opacity="0.55" transform="translate(170.8,1213) scale(75.19999999999999,52)"/><path d="M0.667,0.951 L0.898,0.951 C0.94,0.87 0.97,0.70 0.977,0.518 C0.93,0.75 0.80,0.90 0.667,0.951 Z" fill="#7f92ad" fill-opacity="0.72" transform="translate(170.8,1213) scale(75.19999999999999,52)"/></g><path d="M170.8,1213 H246 V1245.8 H222 C206,1247 200,1265 185.3,1265 C178,1265 173,1264 170.8,1263 Z" fill="none" stroke="url(#gs)" stroke-width="1.2"/><clipPath id="c12"><path d="M212.0,1282.8 L257.0,1341.3 L167.0,1341.3 Z"/></clipPath><path d="M212.0,1282.8 L257.0,1341.3 L167.0,1341.3 Z" fill="url(#gf)"/><g clip-path="url(#c12)"><path d="M0.47,0.13 L0.53,0.09 C0.49,0.2 0.45,0.3 0.36,0.42 Z" fill="#fff" fill-opacity="0.55" transform="translate(167,1282.8) scale(90,58.5)"/><path d="M0.69,0.70 L0.89,0.92 L0.40,0.92 C0.55,0.88 0.65,0.82 0.69,0.70 Z" fill="#7f92ad" fill-opacity="0.72" transform="translate(167,1282.8) scale(90,58.5)"/></g><path d="M212.0,1282.8 L257.0,1341.3 L167.0,1341.3 Z" fill="none" stroke="url(#gs)" stroke-width="1.2"/><clipPath id="c13"><path d="M166.0,1357.6 L257.6,1357.6 L211.8,1416.4 Z"/></clipPath><path d="M166.0,1357.6 L257.6,1357.6 L211.8,1416.4 Z" fill="url(#gf)"/><g clip-path="url(#c13)"><path d="M0.06,0.06 L0.45,0.06 C0.3,0.1 0.2,0.18 0.14,0.3 Z" fill="#fff" fill-opacity="0.55" transform="translate(166,1357.6) scale(91.60000000000002,58.80000000000018)"/><path d="M0.62,0.62 L0.5,0.92 L0.42,0.86 C0.5,0.8 0.57,0.72 0.62,0.62 Z" fill="#7f92ad" fill-opacity="0.72" transform="translate(166,1357.6) scale(91.60000000000002,58.80000000000018)"/></g><path d="M166.0,1357.6 L257.6,1357.6 L211.8,1416.4 Z" fill="none" stroke="url(#gs)" stroke-width="1.2"/><clipPath id="c14"><path d="M168.2,1434.5 H255.5 V1471 H222 C205,1473 200,1493.4 185,1493.4 C176,1493.4 170,1491.5 168.2,1490 Z"/></clipPath><path d="M168.2,1434.5 H255.5 V1471 H222 C205,1473 200,1493.4 185,1493.4 C176,1493.4 170,1491.5 168.2,1490 Z" fill="url(#gf)"/><g clip-path="url(#c14)"><path d="M0.046,0.239 C0.058,0.13 0.068,0.05 0.10,0.044 L0.30,0.044 C0.18,0.065 0.09,0.14 0.046,0.239 Z" fill="#fff" fill-opacity="0.55" transform="translate(168.2,1434.5) scale(87.30000000000001,58.90000000000009)"/><path d="M0.667,0.951 L0.898,0.951 C0.94,0.87 0.97,0.70 0.977,0.518 C0.93,0.75 0.80,0.90 0.667,0.951 Z" fill="#7f92ad" fill-opacity="0.72" transform="translate(168.2,1434.5) scale(87.30000000000001,58.90000000000009)"/></g><path d="M168.2,1434.5 H255.5 V1471 H222 C205,1473 200,1493.4 185,1493.4 C176,1493.4 170,1491.5 168.2,1490 Z" fill="none" stroke="url(#gs)" stroke-width="1.2"/><clipPath id="c15"><path d="M182.2,1509.6 H241.5 A1,1 0 0 1 242.5,1510.6 V1568.3 A1,1 0 0 1 241.5,1569.3 H182.2 A1,1 0 0 1 181.2,1568.3 V1510.6 A1,1 0 0 1 182.2,1509.6 Z"/></clipPath><path d="M182.2,1509.6 H241.5 A1,1 0 0 1 242.5,1510.6 V1568.3 A1,1 0 0 1 241.5,1569.3 H182.2 A1,1 0 0 1 181.2,1568.3 V1510.6 A1,1 0 0 1 182.2,1509.6 Z" fill="url(#gf)"/><g clip-path="url(#c15)"><path d="M0.046,0.239 C0.058,0.13 0.068,0.05 0.10,0.044 L0.30,0.044 C0.18,0.065 0.09,0.14 0.046,0.239 Z" fill="#fff" fill-opacity="0.55" transform="translate(181.2,1509.6) scale(61.30000000000001,59.700000000000045)"/><path d="M0.667,0.951 L0.898,0.951 C0.94,0.87 0.97,0.70 0.977,0.518 C0.93,0.75 0.80,0.90 0.667,0.951 Z" fill="#7f92ad" fill-opacity="0.72" transform="translate(181.2,1509.6) scale(61.30000000000001,59.700000000000045)"/></g><path d="M181.2,1517.5 H242.5 M193,1509.6 V1569.3" stroke="#5c7a96" stroke-width="1"/><path d="M182.2,1509.6 H241.5 A1,1 0 0 1 242.5,1510.6 V1568.3 A1,1 0 0 1 241.5,1569.3 H182.2 A1,1 0 0 1 181.2,1568.3 V1510.6 A1,1 0 0 1 182.2,1509.6 Z" fill="none" stroke="url(#gs)" stroke-width="1.2"/><clipPath id="c16"><path d="M211.8,1645.3 A30,30 0 1 1 240.5,1623.5 V1628.5 H242.5 V1645.3 Z"/></clipPath><path d="M211.8,1645.3 A30,30 0 1 1 240.5,1623.5 V1628.5 H242.5 V1645.3 Z" fill="url(#gf)"/><g clip-path="url(#c16)"><path d="M0.046,0.239 C0.058,0.13 0.068,0.05 0.10,0.044 L0.30,0.044 C0.18,0.065 0.09,0.14 0.046,0.239 Z" fill="#fff" fill-opacity="0.55" transform="translate(181,1585.6) scale(61.5,59.700000000000045)"/><path d="M0.667,0.951 L0.898,0.951 C0.94,0.87 0.97,0.70 0.977,0.518 C0.93,0.75 0.80,0.90 0.667,0.951 Z" fill="#7f92ad" fill-opacity="0.72" transform="translate(181,1585.6) scale(61.5,59.700000000000045)"/></g><path d="M211.8,1645.3 A30,30 0 1 1 240.5,1623.5 V1628.5 H242.5 V1645.3 Z" fill="none" stroke="url(#gs)" stroke-width="1.2"/><clipPath id="c17"><path d="M183.0,1662.0 L241.0,1662.0 L241.0,1705.0 L212.0,1720.8 L183.0,1705.0 Z"/></clipPath><path d="M183.0,1662.0 L241.0,1662.0 L241.0,1705.0 L212.0,1720.8 L183.0,1705.0 Z" fill="url(#gf)"/><g clip-path="url(#c17)"><path d="M0.046,0.239 C0.058,0.13 0.068,0.05 0.10,0.044 L0.30,0.044 C0.18,0.065 0.09,0.14 0.046,0.239 Z" fill="#fff" fill-opacity="0.55" transform="translate(183,1662) scale(58,58.799999999999955)"/><path d="M0.667,0.951 L0.898,0.951 C0.94,0.87 0.97,0.70 0.977,0.518 C0.93,0.75 0.80,0.90 0.667,0.951 Z" fill="#7f92ad" fill-opacity="0.72" transform="translate(183,1662) scale(58,58.799999999999955)"/></g><path d="M183.0,1662.0 L241.0,1662.0 L241.0,1705.0 L212.0,1720.8 L183.0,1705.0 Z" fill="none" stroke="url(#gs)" stroke-width="1.2"/><clipPath id="c18"><path d="M186,1745.5 A25.65,7.2 0 0 1 237.3,1745.5 V1789.8 A25.65,7.2 0 0 1 186,1789.8 Z"/></clipPath><path d="M186,1745.5 A25.65,7.2 0 0 1 237.3,1745.5 V1789.8 A25.65,7.2 0 0 1 186,1789.8 Z" fill="url(#gf)"/><g clip-path="url(#c18)"><path d="M0.046,0.239 C0.058,0.13 0.068,0.05 0.10,0.044 L0.30,0.044 C0.18,0.065 0.09,0.14 0.046,0.239 Z" fill="#fff" fill-opacity="0.55" transform="translate(186,1738.3) scale(51.30000000000001,58.700000000000045)"/><path d="M0.667,0.951 L0.898,0.951 C0.94,0.87 0.97,0.70 0.977,0.518 C0.93,0.75 0.80,0.90 0.667,0.951 Z" fill="#7f92ad" fill-opacity="0.72" transform="translate(186,1738.3) scale(51.30000000000001,58.700000000000045)"/></g><ellipse cx="211.65" cy="1745.5" rx="25.65" ry="7.2" fill="#cfdaea" stroke="#5c7a96" stroke-width="1"/><path d="M186,1745.5 A25.65,7.2 0 0 1 237.3,1745.5 V1789.8 A25.65,7.2 0 0 1 186,1789.8 Z" fill="none" stroke="url(#gs)" stroke-width="1.2"/><clipPath id="c19"><path d="M175,1813.4 H262.4 C252,1830 252,1857 262.4,1873.1 H175 C160,1860 158,1827 175,1813.4 Z"/></clipPath><path d="M175,1813.4 H262.4 C252,1830 252,1857 262.4,1873.1 H175 C160,1860 158,1827 175,1813.4 Z" fill="url(#gf)"/><g clip-path="url(#c19)"><path d="M0.046,0.239 C0.058,0.13 0.068,0.05 0.10,0.044 L0.30,0.044 C0.18,0.065 0.09,0.14 0.046,0.239 Z" fill="#fff" fill-opacity="0.55" transform="translate(161,1813.4) scale(101.39999999999998,59.69999999999982)"/><path d="M0.667,0.951 L0.898,0.951 C0.94,0.87 0.97,0.70 0.977,0.518 C0.93,0.75 0.80,0.90 0.667,0.951 Z" fill="#7f92ad" fill-opacity="0.72" transform="translate(161,1813.4) scale(101.39999999999998,59.69999999999982)"/></g><path d="M175,1813.4 H262.4 C252,1830 252,1857 262.4,1873.1 H175 C160,1860 158,1827 175,1813.4 Z" fill="none" stroke="url(#gs)" stroke-width="1.2"/><clipPath id="c20"><path d="M163,1889.3 H258.5 A12,29.85 0 0 1 258.5,1949 H163 A12,29.85 0 0 1 163,1889.3 Z"/></clipPath><path d="M163,1889.3 H258.5 A12,29.85 0 0 1 258.5,1949 H163 A12,29.85 0 0 1 163,1889.3 Z" fill="url(#gf)"/><g clip-path="url(#c20)"><path d="M0.046,0.239 C0.058,0.13 0.068,0.05 0.10,0.044 L0.30,0.044 C0.18,0.065 0.09,0.14 0.046,0.239 Z" fill="#fff" fill-opacity="0.55" transform="translate(152.8,1889.3) scale(117.80000000000001,59.700000000000045)"/><path d="M0.667,0.951 L0.898,0.951 C0.94,0.87 0.97,0.70 0.977,0.518 C0.93,0.75 0.80,0.90 0.667,0.951 Z" fill="#7f92ad" fill-opacity="0.72" transform="translate(152.8,1889.3) scale(117.80000000000001,59.700000000000045)"/></g><ellipse cx="258.5" cy="1919.15" rx="12" ry="29.85" fill="#c8d4e6" stroke="#5c7a96" stroke-width="1"/><path d="M163,1889.3 H258.5 A12,29.85 0 0 1 258.5,1949 H163 A12,29.85 0 0 1 163,1889.3 Z" fill="none" stroke="url(#gs)" stroke-width="1.2"/><clipPath id="c21"><path d="M184,1965.7 H210 A30,29.45 0 0 1 210,2024.6 H184 Z"/></clipPath><path d="M184,1965.7 H210 A30,29.45 0 0 1 210,2024.6 H184 Z" fill="url(#gf)"/><g clip-path="url(#c21)"><path d="M0.046,0.239 C0.058,0.13 0.068,0.05 0.10,0.044 L0.30,0.044 C0.18,0.065 0.09,0.14 0.046,0.239 Z" fill="#fff" fill-opacity="0.55" transform="translate(184,1965.7) scale(56,58.899999999999864)"/><path d="M0.667,0.951 L0.898,0.951 C0.94,0.87 0.97,0.70 0.977,0.518 C0.93,0.75 0.80,0.90 0.667,0.951 Z" fill="#7f92ad" fill-opacity="0.72" transform="translate(184,1965.7) scale(56,58.899999999999864)"/></g><path d="M184,1965.7 H210 A30,29.45 0 0 1 210,2024.6 H184 Z" fill="none" stroke="url(#gs)" stroke-width="1.2"/><path d="M161,2041 H262" stroke="#5c7a96" stroke-width="1.4"/></svg>
<div style="position:absolute;left:314px;top:320px;width:2104px;height:1724px;background:#fff;"></div>
<svg style="position:absolute;left:314px;top:320px;" width="2104" height="1724" viewBox="314 320 2104 1724"><path d="M356.40,320V2044M402.61,320V2044M448.82,320V2044M495.03,320V2044M541.24,320V2044M587.45,320V2044M633.66,320V2044M679.87,320V2044M726.08,320V2044M772.29,320V2044M818.50,320V2044M864.71,320V2044M910.92,320V2044M957.13,320V2044M1003.34,320V2044M1049.55,320V2044M1095.76,320V2044M1141.97,320V2044M1188.18,320V2044M1234.39,320V2044M1280.60,320V2044M1326.81,320V2044M1373.02,320V2044M1419.23,320V2044M1465.44,320V2044M1511.65,320V2044M1557.86,320V2044M1604.07,320V2044M1650.28,320V2044M1696.49,320V2044M1742.70,320V2044M1788.91,320V2044M1835.12,320V2044M1881.33,320V2044M1927.54,320V2044M1973.75,320V2044M2019.96,320V2044M2066.17,320V2044M2112.38,320V2044M2158.59,320V2044M2204.80,320V2044M2251.01,320V2044M2297.22,320V2044M2343.43,320V2044M2389.64,320V2044M314,334.40H2418M314,380.61H2418M314,426.82H2418M314,473.03H2418M314,519.24H2418M314,565.45H2418M314,611.66H2418M314,657.87H2418M314,704.08H2418M314,750.29H2418M314,796.50H2418M314,842.71H2418M314,888.92H2418M314,935.13H2418M314,981.34H2418M314,1027.55H2418M314,1073.76H2418M314,1119.97H2418M314,1166.18H2418M314,1212.39H2418M314,1258.60H2418M314,1304.81H2418M314,1351.02H2418M314,1397.23H2418M314,1443.44H2418M314,1489.65H2418M314,1535.86H2418M314,1582.07H2418M314,1628.28H2418M314,1674.49H2418M314,1720.70H2418M314,1766.91H2418M314,1813.12H2418M314,1859.33H2418M314,1905.54H2418M314,1951.75H2418M314,1997.96H2418" stroke="#dcdcdc" stroke-width="1.3"/><path d="M1339,449 V567" fill="none" stroke="#000" stroke-width="4.2" stroke-linecap="round"/><path d="M1339.3,691.7 V811.5" fill="none" stroke="#000" stroke-width="4.2" stroke-linecap="round"/><path d="M1222.1,998.7 C1121.5,1078.3 1119.0,1065.6 1119,1210 V1618" fill="none" stroke="#000" stroke-width="4.2" stroke-linecap="round"/><path d="M1455.1,998.8 C1533.3,1056.8 1559.0,1066.2 1559,1133" fill="none" stroke="#000" stroke-width="4.2" stroke-linecap="round"/><path d="M1558.3,1258 V1375.6 M1558.4,1500.3 V1618" fill="none" stroke="#000" stroke-width="4.2" stroke-linecap="round"/><path d="M1120.5,1742.4 C1120,1794.1 1124.9,1807.1 1251.9,1871.7" fill="none" stroke="#000" stroke-width="4.2" stroke-linecap="round"/><path d="M1558.6,1743.1 C1558.6,1811.9 1515.4,1821.2 1424.5,1871.2" fill="none" stroke="#000" stroke-width="4.2" stroke-linecap="round"/><clipPath id="c22"><path d="M1200,392.04999999999995 A138.29999999999995,57.650000000000006 0 1 1 1476.6,392.04999999999995 A138.29999999999995,57.650000000000006 0 1 1 1200,392.04999999999995 Z"/></clipPath><path d="M1200,392.04999999999995 A138.29999999999995,57.650000000000006 0 1 1 1476.6,392.04999999999995 A138.29999999999995,57.650000000000006 0 1 1 1200,392.04999999999995 Z" fill="url(#gf)"/><g clip-path="url(#c22)"><path d="M0.035,0.555 C0.03,0.38 0.09,0.18 0.339,0.083 C0.22,0.15 0.10,0.32 0.035,0.555 Z" fill="#fff" fill-opacity="0.55" transform="translate(1200,334.4) scale(276.5999999999999,115.30000000000001)"/><path d="M0.897,0.28 C0.96,0.36 0.975,0.55 0.92,0.68 C0.85,0.82 0.72,0.88 0.59,0.896 C0.76,0.82 0.87,0.62 0.897,0.28 Z" fill="#7f92ad" fill-opacity="0.72" transform="translate(1200,334.4) scale(276.5999999999999,115.30000000000001)"/></g><path d="M1200,392.04999999999995 A138.29999999999995,57.650000000000006 0 1 1 1476.6,392.04999999999995 A138.29999999999995,57.650000000000006 0 1 1 1200,392.04999999999995 Z" fill="none" stroke="url(#gs)" stroke-width="1.8"/><clipPath id="c23"><path d="M1206.6,566.4 H1472 A28,62.65 0 0 1 1472,691.7 H1206.6 A28,62.65 0 0 1 1206.6,566.4 Z"/></clipPath><path d="M1206.6,566.4 H1472 A28,62.65 0 0 1 1472,691.7 H1206.6 A28,62.65 0 0 1 1206.6,566.4 Z" fill="url(#gf)"/><g clip-path="url(#c23)"><path d="M0.046,0.239 C0.058,0.13 0.068,0.05 0.10,0.044 L0.30,0.044 C0.18,0.065 0.09,0.14 0.046,0.239 Z" fill="#fff" fill-opacity="0.55" transform="translate(1178.6,566.4) scale(321.4000000000001,125.30000000000007)"/><path d="M0.667,0.951 L0.898,0.951 C0.94,0.87 0.97,0.70 0.977,0.518 C0.93,0.75 0.80,0.90 0.667,0.951 Z" fill="#7f92ad" fill-opacity="0.72" transform="translate(1178.6,566.4) scale(321.4000000000001,125.30000000000007)"/></g><path d="M1206.6,566.4 H1472 A28,62.65 0 0 1 1472,691.7 H1206.6 A28,62.65 0 0 1 1206.6,566.4 Z" fill="none" stroke="url(#gs)" stroke-width="2"/><clipPath id="c24"><path d="M1425.7,1132.7 H1691.9 A28,62.65 0 0 1 1691.9,1258 H1425.7 A28,62.65 0 0 1 1425.7,1132.7 Z"/></clipPath><path d="M1425.7,1132.7 H1691.9 A28,62.65 0 0 1 1691.9,1258 H1425.7 A28,62.65 0 0 1 1425.7,1132.7 Z" fill="url(#gf)"/><g clip-path="url(#c24)"><path d="M0.046,0.239 C0.058,0.13 0.068,0.05 0.10,0.044 L0.30,0.044 C0.18,0.065 0.09,0.14 0.046,0.239 Z" fill="#fff" fill-opacity="0.55" transform="translate(1397.7,1132.7) scale(322.20000000000005,125.29999999999995)"/><path d="M0.667,0.951 L0.898,0.951 C0.94,0.87 0.97,0.70 0.977,0.518 C0.93,0.75 0.80,0.90 0.667,0.951 Z" fill="#7f92ad" fill-opacity="0.72" transform="translate(1397.7,1132.7) scale(322.20000000000005,125.29999999999995)"/></g><path d="M1425.7,1132.7 H1691.9 A28,62.65 0 0 1 1691.9,1258 H1425.7 A28,62.65 0 0 1 1425.7,1132.7 Z" fill="none" stroke="url(#gs)" stroke-width="2"/><clipPath id="c25"><path d="M1425.7,1375.6 H1691.9 A28,62.35 0 0 1 1691.9,1500.3 H1425.7 A28,62.35 0 0 1 1425.7,1375.6 Z"/></clipPath><path d="M1425.7,1375.6 H1691.9 A28,62.35 0 0 1 1691.9,1500.3 H1425.7 A28,62.35 0 0 1 1425.7,1375.6 Z" fill="url(#gf)"/><g clip-path="url(#c25)"><path d="M0.046,0.239 C0.058,0.13 0.068,0.05 0.10,0.044 L0.30,0.044 C0.18,0.065 0.09,0.14 0.046,0.239 Z" fill="#fff" fill-opacity="0.55" transform="translate(1397.7,1375.6) scale(322.20000000000005,124.70000000000005)"/><path d="M0.667,0.951 L0.898,0.951 C0.94,0.87 0.97,0.70 0.977,0.518 C0.93,0.75 0.80,0.90 0.667,0.951 Z" fill="#7f92ad" fill-opacity="0.72" transform="translate(1397.7,1375.6) scale(322.20000000000005,124.70000000000005)"/></g><path d="M1425.7,1375.6 H1691.9 A28,62.35 0 0 1 1691.9,1500.3 H1425.7 A28,62.35 0 0 1 1425.7,1375.6 Z" fill="none" stroke="url(#gs)" stroke-width="2"/><clipPath id="c26"><path d="M1426.2,1618 H1691.9 A28,62.50 0 0 1 1691.9,1743 H1426.2 A28,62.50 0 0 1 1426.2,1618 Z"/></clipPath><path d="M1426.2,1618 H1691.9 A28,62.50 0 0 1 1691.9,1743 H1426.2 A28,62.50 0 0 1 1426.2,1618 Z" fill="url(#gf)"/><g clip-path="url(#c26)"><path d="M0.046,0.239 C0.058,0.13 0.068,0.05 0.10,0.044 L0.30,0.044 C0.18,0.065 0.09,0.14 0.046,0.239 Z" fill="#fff" fill-opacity="0.55" transform="translate(1398.2,1618) scale(321.70000000000005,125)"/><path d="M0.667,0.951 L0.898,0.951 C0.94,0.87 0.97,0.70 0.977,0.518 C0.93,0.75 0.80,0.90 0.667,0.951 Z" fill="#7f92ad" fill-opacity="0.72" transform="translate(1398.2,1618) scale(321.70000000000005,125)"/></g><path d="M1426.2,1618 H1691.9 A28,62.50 0 0 1 1691.9,1743 H1426.2 A28,62.50 0 0 1 1426.2,1618 Z" fill="none" stroke="url(#gs)" stroke-width="2"/><clipPath id="c27"><path d="M1002.7,1618 H1214 A65.5,62.1 0 0 1 1214,1742.2 H1002.7 L958.6,1680.1 Z"/></clipPath><path d="M1002.7,1618 H1214 A65.5,62.1 0 0 1 1214,1742.2 H1002.7 L958.6,1680.1 Z" fill="url(#gf)"/><g clip-path="url(#c27)"><path d="M0.046,0.239 C0.058,0.13 0.068,0.05 0.10,0.044 L0.30,0.044 C0.18,0.065 0.09,0.14 0.046,0.239 Z" fill="#fff" fill-opacity="0.55" transform="translate(958.6,1618) scale(320.9,124.20000000000005)"/><path d="M0.667,0.951 L0.898,0.951 C0.94,0.87 0.97,0.70 0.977,0.518 C0.93,0.75 0.80,0.90 0.667,0.951 Z" fill="#7f92ad" fill-opacity="0.72" transform="translate(958.6,1618) scale(320.9,124.20000000000005)"/></g><path d="M1002.7,1618 H1214 A65.5,62.1 0 0 1 1214,1742.2 H1002.7 L958.6,1680.1 Z" fill="none" stroke="url(#gs)" stroke-width="2"/><clipPath id="c28"><path d="M1200.7,1916.85 A137.85000000000002,57.25 0 1 1 1476.4,1916.85 A137.85000000000002,57.25 0 1 1 1200.7,1916.85 Z"/></clipPath><path d="M1200.7,1916.85 A137.85000000000002,57.25 0 1 1 1476.4,1916.85 A137.85000000000002,57.25 0 1 1 1200.7,1916.85 Z" fill="url(#gf)"/><g clip-path="url(#c28)"><path d="M0.035,0.555 C0.03,0.38 0.09,0.18 0.339,0.083 C0.22,0.15 0.10,0.32 0.035,0.555 Z" fill="#fff" fill-opacity="0.55" transform="translate(1200.7,1859.6) scale(275.70000000000005,114.5)"/><path d="M0.897,0.28 C0.96,0.36 0.975,0.55 0.92,0.68 C0.85,0.82 0.72,0.88 0.59,0.896 C0.76,0.82 0.87,0.62 0.897,0.28 Z" fill="#7f92ad" fill-opacity="0.72" transform="translate(1200.7,1859.6) scale(275.70000000000005,114.5)"/></g><path d="M1200.7,1916.85 A137.85000000000002,57.25 0 1 1 1476.4,1916.85 A137.85000000000002,57.25 0 1 1 1200.7,1916.85 Z" fill="none" stroke="url(#gs)" stroke-width="1.8"/><clipPath id="cylc"><path d="M1201.5,846.8 V981.9 A137.35000000000002,33 0 0 0 1476.2,981.9 V846.8 Z"/></clipPath><path d="M1201.5,846.8 V981.9 A137.35000000000002,33 0 0 0 1476.2,981.9 V846.8 Z" fill="url(#gcyl)"/><g clip-path="url(#cylc)"><path d="M1300,1003.4 C1390,990 1445,955 1454.7,904.7 L1454.7,982 C1410,998 1350,1004 1300,1003.4 Z" fill="#7f92ad" fill-opacity="0.8"/></g><path d="M1201.5,846.8 V981.9 A137.35000000000002,33 0 0 0 1476.2,981.9 V846.8 Z" fill="none" stroke="url(#gs)" stroke-width="3"/><g clip-path="url(#cylc)"><path d="M1201.5,840 V1000 M1476.2,840 V1000" stroke="url(#gs)" stroke-width="8"/></g><ellipse cx="1338.85" cy="847" rx="138.55" ry="36.4" fill="#5d6f81"/><ellipse cx="1339.6" cy="847.6" rx="131.6" ry="33.6" fill="#cfdbeb"/><path d="M1224,844 C1228,834 1250,826 1280,825.5 C1250,832 1233,846 1254,862 C1238,858 1224,852 1224,844 Z" fill="#fff" fill-opacity="0.55"/></svg>
<div class="t" style="left:1305.7px;top:376.8px;font-size:33.5px;line-height:33.5px;color:#000;-webkit-text-stroke:0.35px #000;letter-spacing:-1.10px;">Start</div>
<div class="t" style="left:1261.4px;top:613.8px;font-size:33.5px;line-height:33.5px;color:#000;-webkit-text-stroke:0.35px #000;letter-spacing:-0.93px;">Read Input</div>
<div class="t" style="left:1295.7px;top:896.7px;font-size:33.5px;line-height:33.5px;color:#000;-webkit-text-stroke:0.35px #000;letter-spacing:-1.08px;">Valid?</div>
<div class="t" style="left:1499.1px;top:1036.2px;font-size:33.5px;line-height:33.5px;color:#000;-webkit-text-stroke:0.35px #000;letter-spacing:-1.80px;">Yes</div>
<div class="t" style="left:1462.5px;top:1180.0px;font-size:33.5px;line-height:33.5px;color:#000;-webkit-text-stroke:0.35px #000;letter-spacing:-0.83px;">Process Data</div>
<div class="t" style="left:1099.3px;top:1272.9px;font-size:33.5px;line-height:33.5px;color:#000;-webkit-text-stroke:0.35px #000;letter-spacing:-3.60px;">No</div>
<div class="t" style="left:1485.3px;top:1422.9px;font-size:33.5px;line-height:33.5px;color:#000;-webkit-text-stroke:0.35px #000;letter-spacing:-0.84px;">Transform</div>
<div class="t" style="left:1038.5px;top:1665.4px;font-size:33.5px;line-height:33.5px;color:#000;-webkit-text-stroke:0.35px #000;letter-spacing:-0.72px;">Show Error</div>
<div class="t" style="left:1468.2px;top:1665.4px;font-size:33.5px;line-height:33.5px;color:#000;-webkit-text-stroke:0.35px #000;letter-spacing:-0.69px;">Write Output</div>
<div class="t" style="left:1310.6px;top:1901.0px;font-size:33.5px;line-height:33.5px;color:#000;-webkit-text-stroke:0.35px #000;letter-spacing:-2.05px;">End</div>
<div style="position:absolute;left:2418px;top:320px;width:2px;height:1724px;background:#d3d8de;"></div>
<div style="position:absolute;left:2420px;top:320px;width:558px;height:1724px;background:#e8ecf0;"></div>
<div style="position:absolute;left:2420px;top:320px;width:558px;height:60.4px;background:#fff;"></div>
<div class="t" style="left:2439.5px;top:339.4px;font-size:22px;line-height:22px;color:#7c7c7c;-webkit-text-stroke:0.6px #7c7c7c;letter-spacing:1.38px;">Inspector</div>
<div style="position:absolute;left:2420px;top:380.4px;width:558px;height:49.400000000000034px;background:#d1d8e0;"></div>
<svg style="position:absolute;left:2428px;top:395px;" width="26" height="20" viewBox="2428 395 26 20"><path d="M2432.5,400.5 L2440,408.1 L2447.5,400.5" fill="none" stroke="#6e7277" stroke-width="2.2" stroke-linecap="round" stroke-linejoin="round"/></svg>
<div class="t" style="left:2459.3px;top:394.9px;font-size:20px;line-height:20px;color:#1d1d1f;-webkit-text-stroke:0.55px #1d1d1f;letter-spacing:0.48px;">Layers</div>
<div style="position:absolute;left:2420px;top:472px;width:558px;height:2px;background:#d9dde2;"></div>
<svg style="position:absolute;left:2430px;top:440px;" width="80" height="25" viewBox="2430 440 80 25"><path d="M2438,451.3 C2442,444.5 2446,442.5 2450.5,442.5 C2455,442.5 2459,444.5 2463,451.3 C2459,458 2455,460 2450.5,460 C2446,460 2442,458 2438,451.3 Z" fill="none" stroke="#7a7a7a" stroke-width="2"/><circle cx="2450.5" cy="451.3" r="5.3" fill="#7a7a7a"/><path d="M2441,442.5 L2460,460" stroke="#e8ecf0" stroke-width="3.2"/><path d="M2442,443 L2459,459.5" stroke="#7a7a7a" stroke-width="1.8"/><rect x="2476.5" y="446.5" width="23" height="10" rx="2" fill="none" stroke="#f0892b" stroke-width="2"/><path d="M2480,447 v3 M2483,447 v2 M2486,447 v3 M2489,447 v2 M2492,447 v3 M2495,447 v2" stroke="#f0892b" stroke-width="1"/></svg>
<div class="t" style="left:2510.9px;top:440.6px;font-size:20.5px;line-height:20.5px;color:#f0882a;">Guides</div>
<div class="t" style="left:2950.8px;top:441.6px;font-size:19px;line-height:19px;color:#8a8a8a;">0</div>
<div style="position:absolute;left:2948.5px;top:474px;width:29.5px;height:400px;background:#f6f7f8;"></div>
<div style="position:absolute;left:2948px;top:474px;width:1.5px;height:400px;background:#dcdfe3;"></div>
<div style="position:absolute;left:2420px;top:474px;width:528.5px;height:38px;background:#d4e0f2;"></div>
<div style="position:absolute;left:2955.8px;top:480px;width:16px;height:264.4px;background:#c3c3c3;border-radius:8px;"></div>
<div class="t" style="left:2503.5px;top:483.1px;font-size:20px;line-height:20px;color:#1d1d1f;letter-spacing:-0.13px;">Main</div>
<div class="t" style="left:2518.8px;top:519.3px;font-size:20px;line-height:20px;color:#1d1d1f;letter-spacing:-0.07px;">eBS0</div>
<div class="t" style="left:2518.8px;top:553.2px;font-size:20px;line-height:20px;color:#1d1d1f;letter-spacing:-0.07px;">eBS6</div>
<div class="t" style="left:2518.8px;top:587.2px;font-size:20px;line-height:20px;color:#1d1d1f;letter-spacing:0.07px;">eBS20FC</div>
<div class="t" style="left:2518.8px;top:621.1px;font-size:20px;line-height:20px;color:#1d1d1f;letter-spacing:-0.07px;">eBS6</div>
<div class="t" style="left:2518.8px;top:655.1px;font-size:20px;line-height:20px;color:#1d1d1f;letter-spacing:-0.07px;">eBS6</div>
<div class="t" style="left:2518.8px;top:689.0px;font-size:20px;line-height:20px;color:#1d1d1f;">eBS6FC</div>
<div class="t" style="left:2518.8px;top:723.0px;font-size:20px;line-height:20px;color:#1d1d1f;letter-spacing:-0.07px;">eBS6</div>
<div class="t" style="left:2518.8px;top:756.9px;font-size:20px;line-height:20px;color:#1d1d1f;letter-spacing:-0.07px;">eBS0</div>
<div class="t" style="left:2518.8px;top:790.9px;font-size:20px;line-height:20px;color:#1d1d1f;letter-spacing:0.91px;">Connector</div>
<div class="t" style="left:2518.8px;top:824.8px;font-size:20px;line-height:20px;color:#1d1d1f;letter-spacing:0.91px;">Connector</div>
<div class="t" style="left:2518.8px;top:858.8px;font-size:20px;line-height:20px;color:#1d1d1f;letter-spacing:0.91px;">Connector</div>
<svg style="position:absolute;left:2420px;top:474px;" width="528" height="400" viewBox="2420 474 528 400"><path d="M2439.5,490.3 L2446,496.8 L2452.5,490.3" fill="none" stroke="#666" stroke-width="2" stroke-linecap="round" stroke-linejoin="round"/><circle cx="2479.9" cy="492.9" r="9" fill="none" stroke="#3a7ff5" stroke-width="2"/><circle cx="2479.9" cy="492.9" r="6.6" fill="#3a7ff5"/><path d="M2869.6,493.6 C2873.5,487.6 2878,486.0 2882.3,486.0 C2886.6,486.0 2891.1,487.6 2895,493.6 C2891.1,499.6 2886.6,501.20000000000005 2882.3,501.20000000000005 C2878,501.20000000000005 2873.5,499.6 2869.6,493.6 Z" fill="none" stroke="#1f1f1f" stroke-width="1.7"/><circle cx="2882.3" cy="493.6" r="5.4" fill="#1f1f1f"/><circle cx="2882.3" cy="493.6" r="1.8" fill="#eef1f5"/><rect x="2912.9" y="492.40000000000003" width="11.9" height="9.9" rx="1.6" fill="none" stroke="#6d7177" stroke-width="1.6"/><path d="M2922.9,492.40000000000003 V489.0 a4.1,4.1 0 0 1 8.2,0 V491.3" fill="none" stroke="#6d7177" stroke-width="1.6"/><rect x="2487" y="520.1" width="18.2" height="17.8" rx="3" fill="#717175"/><path d="M2869.6,529.1 C2873.5,523.1 2878,521.5 2882.3,521.5 C2886.6,521.5 2891.1,523.1 2895,529.1 C2891.1,535.1 2886.6,536.7 2882.3,536.7 C2878,536.7 2873.5,535.1 2869.6,529.1 Z" fill="none" stroke="#1f1f1f" stroke-width="1.7"/><circle cx="2882.3" cy="529.1" r="5.4" fill="#1f1f1f"/><circle cx="2882.3" cy="529.1" r="1.8" fill="#eef1f5"/><rect x="2912.9" y="527.9" width="11.9" height="9.9" rx="1.6" fill="none" stroke="#6d7177" stroke-width="1.6"/><path d="M2922.9,527.9 V524.5 a4.1,4.1 0 0 1 8.2,0 V526.8000000000001" fill="none" stroke="#6d7177" stroke-width="1.6"/><rect x="2487" y="554.1" width="18.2" height="17.8" rx="3" fill="#717175"/><path d="M2869.6,563.1 C2873.5,557.1 2878,555.5 2882.3,555.5 C2886.6,555.5 2891.1,557.1 2895,563.1 C2891.1,569.1 2886.6,570.7 2882.3,570.7 C2878,570.7 2873.5,569.1 2869.6,563.1 Z" fill="none" stroke="#1f1f1f" stroke-width="1.7"/><circle cx="2882.3" cy="563.1" r="5.4" fill="#1f1f1f"/><circle cx="2882.3" cy="563.1" r="1.8" fill="#eef1f5"/><rect x="2912.9" y="561.9" width="11.9" height="9.9" rx="1.6" fill="none" stroke="#6d7177" stroke-width="1.6"/><path d="M2922.9,561.9 V558.5 a4.1,4.1 0 0 1 8.2,0 V560.8000000000001" fill="none" stroke="#6d7177" stroke-width="1.6"/><rect x="2487" y="588.0" width="18.2" height="17.8" rx="3" fill="#717175"/><path d="M2869.6,597.0 C2873.5,591.0 2878,589.4 2882.3,589.4 C2886.6,589.4 2891.1,591.0 2895,597.0 C2891.1,603.0 2886.6,604.6 2882.3,604.6 C2878,604.6 2873.5,603.0 2869.6,597.0 Z" fill="none" stroke="#1f1f1f" stroke-width="1.7"/><circle cx="2882.3" cy="597.0" r="5.4" fill="#1f1f1f"/><circle cx="2882.3" cy="597.0" r="1.8" fill="#eef1f5"/><rect x="2912.9" y="595.8" width="11.9" height="9.9" rx="1.6" fill="none" stroke="#6d7177" stroke-width="1.6"/><path d="M2922.9,595.8 V592.4 a4.1,4.1 0 0 1 8.2,0 V594.7" fill="none" stroke="#6d7177" stroke-width="1.6"/><rect x="2487" y="622.0" width="18.2" height="17.8" rx="3" fill="#717175"/><path d="M2869.6,631.0 C2873.5,625.0 2878,623.4 2882.3,623.4 C2886.6,623.4 2891.1,625.0 2895,631.0 C2891.1,637.0 2886.6,638.6 2882.3,638.6 C2878,638.6 2873.5,637.0 2869.6,631.0 Z" fill="none" stroke="#1f1f1f" stroke-width="1.7"/><circle cx="2882.3" cy="631.0" r="5.4" fill="#1f1f1f"/><circle cx="2882.3" cy="631.0" r="1.8" fill="#eef1f5"/><rect x="2912.9" y="629.8" width="11.9" height="9.9" rx="1.6" fill="none" stroke="#6d7177" stroke-width="1.6"/><path d="M2922.9,629.8 V626.4 a4.1,4.1 0 0 1 8.2,0 V628.7" fill="none" stroke="#6d7177" stroke-width="1.6"/><rect x="2487" y="655.9" width="18.2" height="17.8" rx="3" fill="#717175"/><path d="M2869.6,664.9 C2873.5,658.9 2878,657.3 2882.3,657.3 C2886.6,657.3 2891.1,658.9 2895,664.9 C2891.1,670.9 2886.6,672.5 2882.3,672.5 C2878,672.5 2873.5,670.9 2869.6,664.9 Z" fill="none" stroke="#1f1f1f" stroke-width="1.7"/><circle cx="2882.3" cy="664.9" r="5.4" fill="#1f1f1f"/><circle cx="2882.3" cy="664.9" r="1.8" fill="#eef1f5"/><rect x="2912.9" y="663.6999999999999" width="11.9" height="9.9" rx="1.6" fill="none" stroke="#6d7177" stroke-width="1.6"/><path d="M2922.9,663.6999999999999 V660.3 a4.1,4.1 0 0 1 8.2,0 V662.6" fill="none" stroke="#6d7177" stroke-width="1.6"/><rect x="2487" y="689.9" width="18.2" height="17.8" rx="3" fill="#717175"/><path d="M2869.6,698.9 C2873.5,692.9 2878,691.3 2882.3,691.3 C2886.6,691.3 2891.1,692.9 2895,698.9 C2891.1,704.9 2886.6,706.5 2882.3,706.5 C2878,706.5 2873.5,704.9 2869.6,698.9 Z" fill="none" stroke="#1f1f1f" stroke-width="1.7"/><circle cx="2882.3" cy="698.9" r="5.4" fill="#1f1f1f"/><circle cx="2882.3" cy="698.9" r="1.8" fill="#eef1f5"/><rect x="2912.9" y="697.6999999999999" width="11.9" height="9.9" rx="1.6" fill="none" stroke="#6d7177" stroke-width="1.6"/><path d="M2922.9,697.6999999999999 V694.3 a4.1,4.1 0 0 1 8.2,0 V696.6" fill="none" stroke="#6d7177" stroke-width="1.6"/><rect x="2487" y="723.8" width="18.2" height="17.8" rx="3" fill="#717175"/><path d="M2869.6,732.8 C2873.5,726.8 2878,725.1999999999999 2882.3,725.1999999999999 C2886.6,725.1999999999999 2891.1,726.8 2895,732.8 C2891.1,738.8 2886.6,740.4 2882.3,740.4 C2878,740.4 2873.5,738.8 2869.6,732.8 Z" fill="none" stroke="#1f1f1f" stroke-width="1.7"/><circle cx="2882.3" cy="732.8" r="5.4" fill="#1f1f1f"/><circle cx="2882.3" cy="732.8" r="1.8" fill="#eef1f5"/><rect x="2912.9" y="731.5999999999999" width="11.9" height="9.9" rx="1.6" fill="none" stroke="#6d7177" stroke-width="1.6"/><path d="M2922.9,731.5999999999999 V728.1999999999999 a4.1,4.1 0 0 1 8.2,0 V730.5" fill="none" stroke="#6d7177" stroke-width="1.6"/><rect x="2487" y="757.8" width="18.2" height="17.8" rx="3" fill="#717175"/><path d="M2869.6,766.8 C2873.5,760.8 2878,759.1999999999999 2882.3,759.1999999999999 C2886.6,759.1999999999999 2891.1,760.8 2895,766.8 C2891.1,772.8 2886.6,774.4 2882.3,774.4 C2878,774.4 2873.5,772.8 2869.6,766.8 Z" fill="none" stroke="#1f1f1f" stroke-width="1.7"/><circle cx="2882.3" cy="766.8" r="5.4" fill="#1f1f1f"/><circle cx="2882.3" cy="766.8" r="1.8" fill="#eef1f5"/><rect x="2912.9" y="765.5999999999999" width="11.9" height="9.9" rx="1.6" fill="none" stroke="#6d7177" stroke-width="1.6"/><path d="M2922.9,765.5999999999999 V762.1999999999999 a4.1,4.1 0 0 1 8.2,0 V764.5" fill="none" stroke="#6d7177" stroke-width="1.6"/><path d="M2487.5,800.7 H2504.5 M2498,794.2 L2504.5,800.7 L2498,807.2" fill="none" stroke="#7a7a7a" stroke-width="1.6" stroke-linecap="round" stroke-linejoin="round"/><path d="M2869.6,800.7 C2873.5,794.7 2878,793.1 2882.3,793.1 C2886.6,793.1 2891.1,794.7 2895,800.7 C2891.1,806.7 2886.6,808.3000000000001 2882.3,808.3000000000001 C2878,808.3000000000001 2873.5,806.7 2869.6,800.7 Z" fill="none" stroke="#1f1f1f" stroke-width="1.7"/><circle cx="2882.3" cy="800.7" r="5.4" fill="#1f1f1f"/><circle cx="2882.3" cy="800.7" r="1.8" fill="#eef1f5"/><rect x="2912.9" y="799.5" width="11.9" height="9.9" rx="1.6" fill="none" stroke="#6d7177" stroke-width="1.6"/><path d="M2922.9,799.5 V796.1 a4.1,4.1 0 0 1 8.2,0 V798.4000000000001" fill="none" stroke="#6d7177" stroke-width="1.6"/><path d="M2487.5,834.7 H2504.5 M2498,828.2 L2504.5,834.7 L2498,841.2" fill="none" stroke="#7a7a7a" stroke-width="1.6" stroke-linecap="round" stroke-linejoin="round"/><path d="M2869.6,834.7 C2873.5,828.7 2878,827.1 2882.3,827.1 C2886.6,827.1 2891.1,828.7 2895,834.7 C2891.1,840.7 2886.6,842.3000000000001 2882.3,842.3000000000001 C2878,842.3000000000001 2873.5,840.7 2869.6,834.7 Z" fill="none" stroke="#1f1f1f" stroke-width="1.7"/><circle cx="2882.3" cy="834.7" r="5.4" fill="#1f1f1f"/><circle cx="2882.3" cy="834.7" r="1.8" fill="#eef1f5"/><rect x="2912.9" y="833.5" width="11.9" height="9.9" rx="1.6" fill="none" stroke="#6d7177" stroke-width="1.6"/><path d="M2922.9,833.5 V830.1 a4.1,4.1 0 0 1 8.2,0 V832.4000000000001" fill="none" stroke="#6d7177" stroke-width="1.6"/><path d="M2487.5,868.6 H2504.5 M2498,862.1 L2504.5,868.6 L2498,875.1" fill="none" stroke="#7a7a7a" stroke-width="1.6" stroke-linecap="round" stroke-linejoin="round"/><path d="M2869.6,868.6 C2873.5,862.6 2878,861.0 2882.3,861.0 C2886.6,861.0 2891.1,862.6 2895,868.6 C2891.1,874.6 2886.6,876.2 2882.3,876.2 C2878,876.2 2873.5,874.6 2869.6,868.6 Z" fill="none" stroke="#1f1f1f" stroke-width="1.7"/><circle cx="2882.3" cy="868.6" r="5.4" fill="#1f1f1f"/><circle cx="2882.3" cy="868.6" r="1.8" fill="#eef1f5"/><rect x="2912.9" y="867.4" width="11.9" height="9.9" rx="1.6" fill="none" stroke="#6d7177" stroke-width="1.6"/><path d="M2922.9,867.4 V864.0 a4.1,4.1 0 0 1 8.2,0 V866.3000000000001" fill="none" stroke="#6d7177" stroke-width="1.6"/></svg>
<div style="position:absolute;left:2420px;top:874px;width:558px;height:2px;background:#cfd4da;"></div>
<div style="position:absolute;left:2420px;top:876px;width:558px;height:150px;background:#e8ecf0;"></div>
<svg style="position:absolute;left:2430px;top:885px;" width="70" height="25" viewBox="2430 885 70 25"><path d="M2436.6,898 H2451.8 M2444.2,890.4 V905.6" stroke="#555" stroke-width="1.8"/><path d="M2473.3,898 H2489" stroke="#aaa" stroke-width="1.8"/></svg>
<div class="t" style="left:2627.9px;top:963.0px;font-size:23.5px;line-height:23.5px;color:#6e6f73;letter-spacing:0.66px;">No Selection</div>
<div style="position:absolute;left:2420px;top:1029px;width:558px;height:50px;background:#d1d8e0;"></div>
<svg style="position:absolute;left:2428px;top:1044px;" width="26" height="20" viewBox="2428 1044 26 20"><path d="M2432.5,1049.4 L2440,1057.0 L2447.5,1049.4" fill="none" stroke="#6e7277" stroke-width="2.2" stroke-linecap="round" stroke-linejoin="round"/></svg>
<div class="t" style="left:2459.3px;top:1043.6px;font-size:20px;line-height:20px;color:#1d1d1f;-webkit-text-stroke:0.55px #1d1d1f;letter-spacing:0.96px;">Layout</div>
<div class="t" style="left:2438.4px;top:1105.1px;font-size:20px;line-height:20px;color:#737373;letter-spacing:0.64px;">Layout</div>
<div class="btn" style="left:2754px;top:1095px;width:203.6px;height:40.2px;border-radius:10px;"></div>
<div style="left:2922px;top:1099px;width:32px;height:32.2px;border-radius:7px;background:linear-gradient(#4a90f8,#3178ee);"></div>
<svg style="position:absolute;left:2926px;top:1095px;" width="24" height="41" viewBox="2926 1095 24 41"><path d="M2932.5,1111.6 L2938,1106.1 L2943.5,1111.6 M2932.5,1118.6 L2938,1124.1 L2943.5,1118.6" fill="none" stroke="#fff" stroke-width="2.2" stroke-linecap="round" stroke-linejoin="round"/></svg>
<div class="t" style="left:2771.8px;top:1101.0px;font-size:26px;line-height:26px;color:#1d1d1f;letter-spacing:-0.17px;">Layered</div>
<div class="t" style="left:2438.4px;top:1161.1px;font-size:20px;line-height:20px;color:#737373;letter-spacing:0.95px;">Direction</div>
<div class="btn" style="left:2754px;top:1151.5px;width:203.6px;height:39.3px;border-radius:10px;"></div>
<div style="left:2922px;top:1155.5px;width:32px;height:31.3px;border-radius:7px;background:linear-gradient(#4a90f8,#3178ee);"></div>
<svg style="position:absolute;left:2926px;top:1151px;" width="24" height="40" viewBox="2926 1151 24 40"><path d="M2932.5,1167.7 L2938,1162.2 L2943.5,1167.7 M2932.5,1174.7 L2938,1180.2 L2943.5,1174.7" fill="none" stroke="#fff" stroke-width="2.2" stroke-linecap="round" stroke-linejoin="round"/></svg>
<div class="t" style="left:2773.1px;top:1157.0px;font-size:25.5px;line-height:25.5px;color:#1d1d1f;letter-spacing:0.20px;">Top</div>
<div class="t" style="left:2853.9px;top:1157.0px;font-size:25.5px;line-height:25.5px;color:#1d1d1f;letter-spacing:-0.38px;">Bot...</div>
<svg style="position:absolute;left:2820px;top:1158px;" width="28" height="24" viewBox="2820 1158 28 24"><path d="M2825,1169.8 H2842 M2834.6,1162.6 L2842,1169.8 L2834.6,1177" fill="none" stroke="#1d1d1f" stroke-width="2.6" stroke-linecap="round" stroke-linejoin="round"/></svg>
<div class="t" style="left:2438.4px;top:1217.0px;font-size:20px;line-height:20px;color:#737373;letter-spacing:0.86px;">Connectors</div>
<div class="btn" style="left:2754px;top:1207px;width:203.6px;height:40.0px;border-radius:10px;"></div>
<div style="left:2922px;top:1211px;width:32px;height:32.0px;border-radius:7px;background:linear-gradient(#4a90f8,#3178ee);"></div>
<svg style="position:absolute;left:2926px;top:1207px;" width="24" height="41" viewBox="2926 1207 24 41"><path d="M2932.5,1223.5 L2938,1218.0 L2943.5,1223.5 M2932.5,1230.5 L2938,1236.0 L2943.5,1230.5" fill="none" stroke="#fff" stroke-width="2.2" stroke-linecap="round" stroke-linejoin="round"/></svg>
<div class="t" style="left:2771.8px;top:1211.9px;font-size:26px;line-height:26px;color:#1d1d1f;letter-spacing:0.20px;">Curved</div>
<div class="t" style="left:2438.4px;top:1273.1px;font-size:20px;line-height:20px;color:#737373;letter-spacing:0.85px;">Line algorithm</div>
<div class="btn" style="left:2754px;top:1263.5px;width:203.6px;height:39.5px;border-radius:10px;"></div>
<div style="left:2922px;top:1267.5px;width:32px;height:31.5px;border-radius:7px;background:linear-gradient(#4a90f8,#3178ee);"></div>
<svg style="position:absolute;left:2926px;top:1263px;" width="24" height="40" viewBox="2926 1263 24 40"><path d="M2932.5,1279.8 L2938,1274.2 L2943.5,1279.8 M2932.5,1286.8 L2938,1292.2 L2943.5,1286.8" fill="none" stroke="#fff" stroke-width="2.2" stroke-linecap="round" stroke-linejoin="round"/></svg>
<div class="t" style="left:2771.8px;top:1268.0px;font-size:26px;line-height:26px;color:#1d1d1f;letter-spacing:0.47px;">Flowcharts</div>
<div class="t" style="left:2438.4px;top:1330.9px;font-size:20px;line-height:20px;color:#737373;letter-spacing:0.85px;">Node spacing</div>
<div class="btn" style="left:2819.8px;top:1321.2px;width:96.2px;height:39.8px;border-radius:10px;"></div>
<div class="t" style="left:2841.4px;top:1330.5px;font-size:21.5px;line-height:21.5px;color:#1d1d1f;letter-spacing:0.90px;">50</div>
<div class="t" style="left:2932.8px;top:1332.0px;font-size:19.5px;line-height:19.5px;color:#808080;">px</div>
<div class="t" style="left:2438.4px;top:1391.7px;font-size:20px;line-height:20px;color:#737373;letter-spacing:0.60px;">Rank spacing</div>
<div class="btn" style="left:2819.8px;top:1381.3px;width:96.2px;height:39.5px;border-radius:10px;"></div>
<div class="t" style="left:2841.4px;top:1390.7px;font-size:21.5px;line-height:21.5px;color:#1d1d1f;letter-spacing:0.90px;">50</div>
<div class="t" style="left:2932.8px;top:1392.3px;font-size:19.5px;line-height:19.5px;color:#808080;">px</div>
<div style="position:absolute;left:2438px;top:1446.8px;width:520px;height:2px;background:#d5dade;"></div>
<div class="btn" style="left:2438.4px;top:1473px;width:101.3px;height:39.8px;border-radius:10px;"></div>
<div class="t" style="left:2455.0px;top:1481.5px;font-size:23px;line-height:23px;color:#1d1d1f;">Layout</div>
<div style="left:2548.8px;top:1529.3px;width:298.2px;height:39.5px;border-radius:10px;background:#f1f4f7;box-shadow:0 0.5px 1px rgba(0,0,0,0.08);"></div>
<div class="t" style="left:2565.9px;top:1538.0px;font-size:23px;line-height:23px;color:#b1b3b6;letter-spacing:0.26px;">Connect selected shapes</div>
<div style="position:absolute;left:2420px;top:1585px;width:558px;height:49.700000000000045px;background:#d1d8e0;"></div>
<svg style="position:absolute;left:2428px;top:1599px;" width="26" height="20" viewBox="2428 1599 26 20"><path d="M2432.5,1605.2 L2440,1612.8 L2447.5,1605.2" fill="none" stroke="#6e7277" stroke-width="2.2" stroke-linecap="round" stroke-linejoin="round"/></svg>
<div class="t" style="left:2459.3px;top:1600.0px;font-size:20px;line-height:20px;color:#1d1d1f;-webkit-text-stroke:0.55px #1d1d1f;letter-spacing:1.07px;">Smart Connectors</div>
<div class="t" style="left:2438.9px;top:1653.8px;font-size:20px;line-height:20px;color:#262626;letter-spacing:0.70px;">Shape Buffer Distance</div>
<div class="t" style="left:2438.0px;top:1756.3px;font-size:20px;line-height:20px;color:#262626;letter-spacing:0.66px;">Segment Penalty</div>
<svg style="position:absolute;left:2436px;top:1698px;" width="410" height="17" viewBox="2436 1698 410 17"><rect x="2438" y="1704.6" width="404" height="5" rx="2.5" fill="#d6dae0"/><rect x="2438.0" y="1699.8" width="3" height="14.6" rx="1.5" fill="#c6cad0"/><rect x="2446.0" y="1699.8" width="3" height="14.6" rx="1.5" fill="#c6cad0"/><rect x="2454.0" y="1699.8" width="3" height="14.6" rx="1.5" fill="#c6cad0"/><rect x="2462.1" y="1699.8" width="3" height="14.6" rx="1.5" fill="#c6cad0"/><rect x="2470.1" y="1699.8" width="3" height="14.6" rx="1.5" fill="#c6cad0"/><rect x="2478.1" y="1699.8" width="3" height="14.6" rx="1.5" fill="#c6cad0"/><rect x="2486.1" y="1699.8" width="3" height="14.6" rx="1.5" fill="#c6cad0"/><rect x="2494.1" y="1699.8" width="3" height="14.6" rx="1.5" fill="#c6cad0"/><rect x="2502.2" y="1699.8" width="3" height="14.6" rx="1.5" fill="#c6cad0"/><rect x="2510.2" y="1699.8" width="3" height="14.6" rx="1.5" fill="#c6cad0"/><rect x="2518.2" y="1699.8" width="3" height="14.6" rx="1.5" fill="#c6cad0"/><rect x="2526.2" y="1699.8" width="3" height="14.6" rx="1.5" fill="#c6cad0"/><rect x="2534.2" y="1699.8" width="3" height="14.6" rx="1.5" fill="#c6cad0"/><rect x="2542.3" y="1699.8" width="3" height="14.6" rx="1.5" fill="#c6cad0"/><rect x="2550.3" y="1699.8" width="3" height="14.6" rx="1.5" fill="#c6cad0"/><rect x="2558.3" y="1699.8" width="3" height="14.6" rx="1.5" fill="#c6cad0"/><rect x="2566.3" y="1699.8" width="3" height="14.6" rx="1.5" fill="#c6cad0"/><rect x="2574.3" y="1699.8" width="3" height="14.6" rx="1.5" fill="#c6cad0"/><rect x="2582.4" y="1699.8" width="3" height="14.6" rx="1.5" fill="#c6cad0"/><rect x="2590.4" y="1699.8" width="3" height="14.6" rx="1.5" fill="#c6cad0"/><rect x="2598.4" y="1699.8" width="3" height="14.6" rx="1.5" fill="#c6cad0"/><rect x="2606.4" y="1699.8" width="3" height="14.6" rx="1.5" fill="#c6cad0"/><rect x="2614.4" y="1699.8" width="3" height="14.6" rx="1.5" fill="#c6cad0"/><rect x="2622.5" y="1699.8" width="3" height="14.6" rx="1.5" fill="#c6cad0"/><rect x="2630.5" y="1699.8" width="3" height="14.6" rx="1.5" fill="#c6cad0"/><rect x="2638.5" y="1699.8" width="3" height="14.6" rx="1.5" fill="#c6cad0"/><rect x="2646.5" y="1699.8" width="3" height="14.6" rx="1.5" fill="#c6cad0"/><rect x="2654.5" y="1699.8" width="3" height="14.6" rx="1.5" fill="#c6cad0"/><rect x="2662.6" y="1699.8" width="3" height="14.6" rx="1.5" fill="#c6cad0"/><rect x="2670.6" y="1699.8" width="3" height="14.6" rx="1.5" fill="#c6cad0"/><rect x="2678.6" y="1699.8" width="3" height="14.6" rx="1.5" fill="#c6cad0"/><rect x="2686.6" y="1699.8" width="3" height="14.6" rx="1.5" fill="#c6cad0"/><rect x="2694.6" y="1699.8" width="3" height="14.6" rx="1.5" fill="#c6cad0"/><rect x="2702.7" y="1699.8" width="3" height="14.6" rx="1.5" fill="#c6cad0"/><rect x="2710.7" y="1699.8" width="3" height="14.6" rx="1.5" fill="#c6cad0"/><rect x="2718.7" y="1699.8" width="3" height="14.6" rx="1.5" fill="#c6cad0"/><rect x="2726.7" y="1699.8" width="3" height="14.6" rx="1.5" fill="#c6cad0"/><rect x="2734.7" y="1699.8" width="3" height="14.6" rx="1.5" fill="#c6cad0"/><rect x="2742.8" y="1699.8" width="3" height="14.6" rx="1.5" fill="#c6cad0"/><rect x="2750.8" y="1699.8" width="3" height="14.6" rx="1.5" fill="#c6cad0"/><rect x="2758.8" y="1699.8" width="3" height="14.6" rx="1.5" fill="#c6cad0"/><rect x="2766.8" y="1699.8" width="3" height="14.6" rx="1.5" fill="#c6cad0"/><rect x="2774.8" y="1699.8" width="3" height="14.6" rx="1.5" fill="#c6cad0"/><rect x="2782.9" y="1699.8" width="3" height="14.6" rx="1.5" fill="#c6cad0"/><rect x="2790.9" y="1699.8" width="3" height="14.6" rx="1.5" fill="#c6cad0"/><rect x="2798.9" y="1699.8" width="3" height="14.6" rx="1.5" fill="#c6cad0"/><rect x="2806.9" y="1699.8" width="3" height="14.6" rx="1.5" fill="#c6cad0"/><rect x="2814.9" y="1699.8" width="3" height="14.6" rx="1.5" fill="#c6cad0"/><rect x="2823.0" y="1699.8" width="3" height="14.6" rx="1.5" fill="#c6cad0"/><rect x="2831.0" y="1699.8" width="3" height="14.6" rx="1.5" fill="#c6cad0"/><rect x="2839.0" y="1699.8" width="3" height="14.6" rx="1.5" fill="#c6cad0"/></svg>
<div style="left:2592.9px;top:1687px;width:16px;height:39.9px;border-radius:8px;background:#fff;box-shadow:0 0.5px 2px rgba(0,0,0,0.3);"></div>
<div class="btn" style="left:2859.6px;top:1687px;width:96.2px;height:39.9px;border-radius:10px;"></div>
<div class="t" style="left:2881.0px;top:1697.2px;font-size:21px;line-height:21px;color:#1d1d1f;letter-spacing:0.60px;">20</div>
<svg style="position:absolute;left:2436px;top:1800px;" width="410" height="18" viewBox="2436 1800 410 18"><rect x="2438" y="1806.2" width="404" height="5" rx="2.5" fill="#d6dae0"/><rect x="2438.0" y="1801.0" width="3" height="15.3" rx="1.5" fill="#c6cad0"/><rect x="2446.0" y="1801.0" width="3" height="15.3" rx="1.5" fill="#c6cad0"/><rect x="2454.0" y="1801.0" width="3" height="15.3" rx="1.5" fill="#c6cad0"/><rect x="2462.1" y="1801.0" width="3" height="15.3" rx="1.5" fill="#c6cad0"/><rect x="2470.1" y="1801.0" width="3" height="15.3" rx="1.5" fill="#c6cad0"/><rect x="2478.1" y="1801.0" width="3" height="15.3" rx="1.5" fill="#c6cad0"/><rect x="2486.1" y="1801.0" width="3" height="15.3" rx="1.5" fill="#c6cad0"/><rect x="2494.1" y="1801.0" width="3" height="15.3" rx="1.5" fill="#c6cad0"/><rect x="2502.2" y="1801.0" width="3" height="15.3" rx="1.5" fill="#c6cad0"/><rect x="2510.2" y="1801.0" width="3" height="15.3" rx="1.5" fill="#c6cad0"/><rect x="2518.2" y="1801.0" width="3" height="15.3" rx="1.5" fill="#c6cad0"/><rect x="2526.2" y="1801.0" width="3" height="15.3" rx="1.5" fill="#c6cad0"/><rect x="2534.2" y="1801.0" width="3" height="15.3" rx="1.5" fill="#c6cad0"/><rect x="2542.3" y="1801.0" width="3" height="15.3" rx="1.5" fill="#c6cad0"/><rect x="2550.3" y="1801.0" width="3" height="15.3" rx="1.5" fill="#c6cad0"/><rect x="2558.3" y="1801.0" width="3" height="15.3" rx="1.5" fill="#c6cad0"/><rect x="2566.3" y="1801.0" width="3" height="15.3" rx="1.5" fill="#c6cad0"/><rect x="2574.3" y="1801.0" width="3" height="15.3" rx="1.5" fill="#c6cad0"/><rect x="2582.4" y="1801.0" width="3" height="15.3" rx="1.5" fill="#c6cad0"/><rect x="2590.4" y="1801.0" width="3" height="15.3" rx="1.5" fill="#c6cad0"/><rect x="2598.4" y="1801.0" width="3" height="15.3" rx="1.5" fill="#c6cad0"/><rect x="2606.4" y="1801.0" width="3" height="15.3" rx="1.5" fill="#c6cad0"/><rect x="2614.4" y="1801.0" width="3" height="15.3" rx="1.5" fill="#c6cad0"/><rect x="2622.5" y="1801.0" width="3" height="15.3" rx="1.5" fill="#c6cad0"/><rect x="2630.5" y="1801.0" width="3" height="15.3" rx="1.5" fill="#c6cad0"/><rect x="2638.5" y="1801.0" width="3" height="15.3" rx="1.5" fill="#c6cad0"/><rect x="2646.5" y="1801.0" width="3" height="15.3" rx="1.5" fill="#c6cad0"/><rect x="2654.5" y="1801.0" width="3" height="15.3" rx="1.5" fill="#c6cad0"/><rect x="2662.6" y="1801.0" width="3" height="15.3" rx="1.5" fill="#c6cad0"/><rect x="2670.6" y="1801.0" width="3" height="15.3" rx="1.5" fill="#c6cad0"/><rect x="2678.6" y="1801.0" width="3" height="15.3" rx="1.5" fill="#c6cad0"/><rect x="2686.6" y="1801.0" width="3" height="15.3" rx="1.5" fill="#c6cad0"/><rect x="2694.6" y="1801.0" width="3" height="15.3" rx="1.5" fill="#c6cad0"/><rect x="2702.7" y="1801.0" width="3" height="15.3" rx="1.5" fill="#c6cad0"/><rect x="2710.7" y="1801.0" width="3" height="15.3" rx="1.5" fill="#c6cad0"/><rect x="2718.7" y="1801.0" width="3" height="15.3" rx="1.5" fill="#c6cad0"/><rect x="2726.7" y="1801.0" width="3" height="15.3" rx="1.5" fill="#c6cad0"/><rect x="2734.7" y="1801.0" width="3" height="15.3" rx="1.5" fill="#c6cad0"/><rect x="2742.8" y="1801.0" width="3" height="15.3" rx="1.5" fill="#c6cad0"/><rect x="2750.8" y="1801.0" width="3" height="15.3" rx="1.5" fill="#c6cad0"/><rect x="2758.8" y="1801.0" width="3" height="15.3" rx="1.5" fill="#c6cad0"/><rect x="2766.8" y="1801.0" width="3" height="15.3" rx="1.5" fill="#c6cad0"/><rect x="2774.8" y="1801.0" width="3" height="15.3" rx="1.5" fill="#c6cad0"/><rect x="2782.9" y="1801.0" width="3" height="15.3" rx="1.5" fill="#c6cad0"/><rect x="2790.9" y="1801.0" width="3" height="15.3" rx="1.5" fill="#c6cad0"/><rect x="2798.9" y="1801.0" width="3" height="15.3" rx="1.5" fill="#c6cad0"/><rect x="2806.9" y="1801.0" width="3" height="15.3" rx="1.5" fill="#c6cad0"/><rect x="2814.9" y="1801.0" width="3" height="15.3" rx="1.5" fill="#c6cad0"/><rect x="2823.0" y="1801.0" width="3" height="15.3" rx="1.5" fill="#c6cad0"/><rect x="2831.0" y="1801.0" width="3" height="15.3" rx="1.5" fill="#c6cad0"/><rect x="2839.0" y="1801.0" width="3" height="15.3" rx="1.5" fill="#c6cad0"/></svg>
<div style="left:2825.4px;top:1789px;width:16px;height:40.0px;border-radius:8px;background:#fff;box-shadow:0 0.5px 2px rgba(0,0,0,0.3);"></div>
<div class="btn" style="left:2859.6px;top:1789px;width:96.2px;height:40.0px;border-radius:10px;"></div>
<div class="t" style="left:2881.0px;top:1798.5px;font-size:21px;line-height:21px;color:#1d1d1f;letter-spacing:0.60px;">50</div>
</div></body></html>
